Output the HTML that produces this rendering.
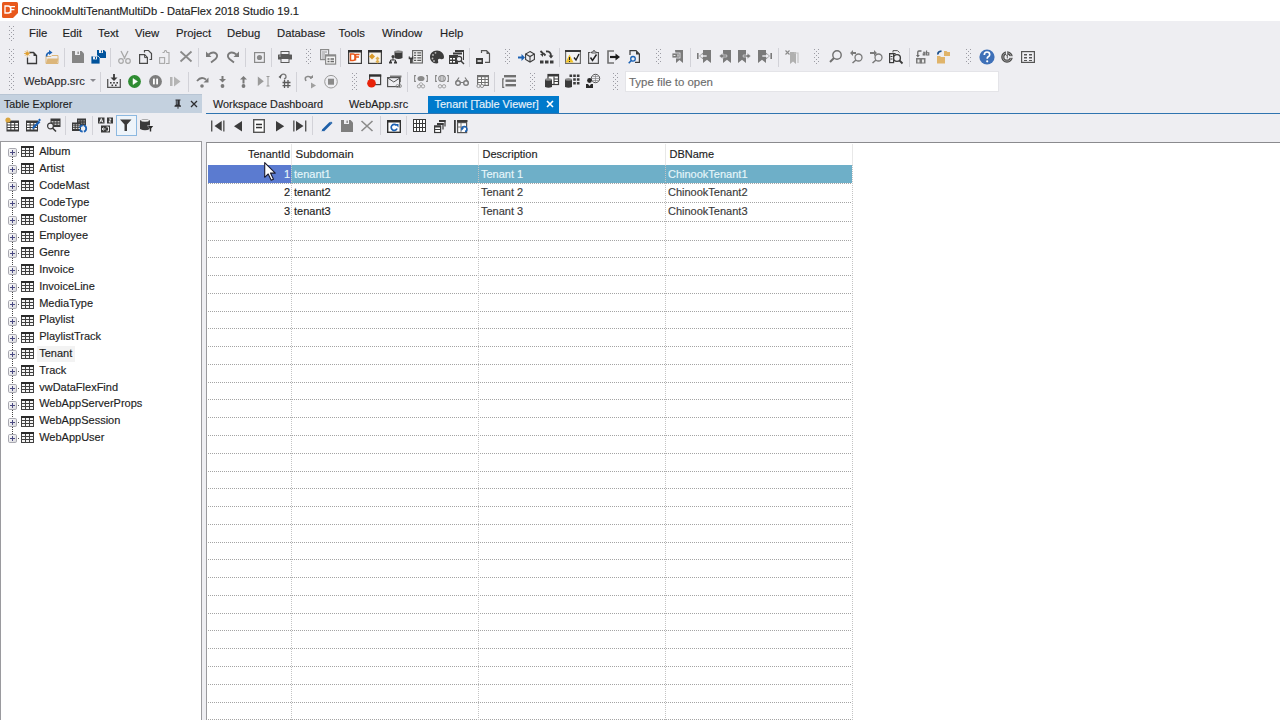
<!DOCTYPE html><html><head><meta charset="utf-8"><style>
*{margin:0;padding:0;box-sizing:border-box}
html,body{width:1280px;height:720px;overflow:hidden;background:#eeeef2;font-family:"Liberation Sans",sans-serif;font-size:11px;color:#1e1e1e}
body{position:relative}
.a{position:absolute}
.t{position:absolute;white-space:nowrap;line-height:11px;height:11px;-webkit-text-stroke:0.15px currentColor}
.grip{position:absolute;width:5px;background-image:linear-gradient(#b4b4bc,#b4b4bc),linear-gradient(#b4b4bc,#b4b4bc);background-size:1px 1px,1px 1px;background-position:0 0,2px 2px}
.sep{position:absolute;width:1px;background:#d2d2d8}
svg{position:absolute;overflow:visible}
</style></head><body>
<div class="a" style="left:0;top:0;width:1280px;height:21px;background:#fff"></div>
<div class="t" style="left:21.5px;top:5.5px;font-size:11.15px">ChinookMultiTenantMultiDb - DataFlex 2018 Studio 19.1</div>
<svg style="left:9px;top:26px" width="5" height="16"><rect x="0" y="0" width="1" height="1" fill="#9c9ca4"/><rect x="4" y="0" width="1" height="1" fill="#9c9ca4"/><rect x="2" y="2" width="1" height="1" fill="#9c9ca4"/><rect x="0" y="4" width="1" height="1" fill="#9c9ca4"/><rect x="4" y="4" width="1" height="1" fill="#9c9ca4"/><rect x="2" y="6" width="1" height="1" fill="#9c9ca4"/><rect x="0" y="8" width="1" height="1" fill="#9c9ca4"/><rect x="4" y="8" width="1" height="1" fill="#9c9ca4"/><rect x="2" y="10" width="1" height="1" fill="#9c9ca4"/><rect x="0" y="12" width="1" height="1" fill="#9c9ca4"/><rect x="4" y="12" width="1" height="1" fill="#9c9ca4"/><rect x="2" y="14" width="1" height="1" fill="#9c9ca4"/></svg>
<div class="t" style="left:29px;top:28px;font-size:11.3px">File</div>
<div class="t" style="left:62.5px;top:28px;font-size:11.3px">Edit</div>
<div class="t" style="left:98px;top:28px;font-size:11.3px">Text</div>
<div class="t" style="left:135px;top:28px;font-size:11.3px">View</div>
<div class="t" style="left:176px;top:28px;font-size:11.3px">Project</div>
<div class="t" style="left:227px;top:28px;font-size:11.3px">Debug</div>
<div class="t" style="left:277px;top:28px;font-size:11.3px">Database</div>
<div class="t" style="left:338.5px;top:28px;font-size:11.3px">Tools</div>
<div class="t" style="left:382px;top:28px;font-size:11.3px">Window</div>
<div class="t" style="left:440px;top:28px;font-size:11.3px">Help</div>
<svg style="left:9px;top:49px" width="5" height="16"><rect x="0" y="0" width="1" height="1" fill="#9c9ca4"/><rect x="4" y="0" width="1" height="1" fill="#9c9ca4"/><rect x="2" y="2" width="1" height="1" fill="#9c9ca4"/><rect x="0" y="4" width="1" height="1" fill="#9c9ca4"/><rect x="4" y="4" width="1" height="1" fill="#9c9ca4"/><rect x="2" y="6" width="1" height="1" fill="#9c9ca4"/><rect x="0" y="8" width="1" height="1" fill="#9c9ca4"/><rect x="4" y="8" width="1" height="1" fill="#9c9ca4"/><rect x="2" y="10" width="1" height="1" fill="#9c9ca4"/><rect x="0" y="12" width="1" height="1" fill="#9c9ca4"/><rect x="4" y="12" width="1" height="1" fill="#9c9ca4"/><rect x="2" y="14" width="1" height="1" fill="#9c9ca4"/></svg>
<svg style="left:9px;top:73px" width="5" height="17"><rect x="0" y="0" width="1" height="1" fill="#9c9ca4"/><rect x="4" y="0" width="1" height="1" fill="#9c9ca4"/><rect x="2" y="2" width="1" height="1" fill="#9c9ca4"/><rect x="0" y="4" width="1" height="1" fill="#9c9ca4"/><rect x="4" y="4" width="1" height="1" fill="#9c9ca4"/><rect x="2" y="6" width="1" height="1" fill="#9c9ca4"/><rect x="0" y="8" width="1" height="1" fill="#9c9ca4"/><rect x="4" y="8" width="1" height="1" fill="#9c9ca4"/><rect x="2" y="10" width="1" height="1" fill="#9c9ca4"/><rect x="0" y="12" width="1" height="1" fill="#9c9ca4"/><rect x="4" y="12" width="1" height="1" fill="#9c9ca4"/><rect x="2" y="14" width="1" height="1" fill="#9c9ca4"/><rect x="0" y="16" width="1" height="1" fill="#9c9ca4"/><rect x="4" y="16" width="1" height="1" fill="#9c9ca4"/></svg>
<div class="t" style="left:24px;top:75.5px;font-size:11.2px;color:#2d2d30">WebApp.src</div>
<svg style="left:90px;top:79px" width="6" height="4"><path d="M0 0h6l-3 3z" fill="#8a8a90"/></svg>
<div class="sep" style="left:64px;top:48px;height:19px"></div>
<div class="sep" style="left:110px;top:48px;height:19px"></div>
<div class="sep" style="left:198px;top:48px;height:19px"></div>
<div class="sep" style="left:245px;top:48px;height:19px"></div>
<div class="sep" style="left:271px;top:48px;height:19px"></div>
<div class="sep" style="left:340px;top:48px;height:19px"></div>
<div class="sep" style="left:469px;top:48px;height:19px"></div>
<div class="sep" style="left:559px;top:48px;height:19px"></div>
<div class="sep" style="left:690px;top:48px;height:19px"></div>
<div class="sep" style="left:778px;top:48px;height:19px"></div>
<div class="sep" style="left:909px;top:48px;height:19px"></div>
<div class="sep" style="left:100px;top:72px;height:20px"></div>
<div class="sep" style="left:188px;top:72px;height:20px"></div>
<div class="sep" style="left:296px;top:72px;height:20px"></div>
<div class="sep" style="left:407px;top:72px;height:20px"></div>
<div class="sep" style="left:494px;top:72px;height:20px"></div>
<svg style="left:306px;top:49px" width="5" height="16"><rect x="0" y="0" width="1" height="1" fill="#9c9ca4"/><rect x="4" y="0" width="1" height="1" fill="#9c9ca4"/><rect x="2" y="2" width="1" height="1" fill="#9c9ca4"/><rect x="0" y="4" width="1" height="1" fill="#9c9ca4"/><rect x="4" y="4" width="1" height="1" fill="#9c9ca4"/><rect x="2" y="6" width="1" height="1" fill="#9c9ca4"/><rect x="0" y="8" width="1" height="1" fill="#9c9ca4"/><rect x="4" y="8" width="1" height="1" fill="#9c9ca4"/><rect x="2" y="10" width="1" height="1" fill="#9c9ca4"/><rect x="0" y="12" width="1" height="1" fill="#9c9ca4"/><rect x="4" y="12" width="1" height="1" fill="#9c9ca4"/><rect x="2" y="14" width="1" height="1" fill="#9c9ca4"/></svg>
<svg style="left:505px;top:49px" width="5" height="16"><rect x="0" y="0" width="1" height="1" fill="#9c9ca4"/><rect x="4" y="0" width="1" height="1" fill="#9c9ca4"/><rect x="2" y="2" width="1" height="1" fill="#9c9ca4"/><rect x="0" y="4" width="1" height="1" fill="#9c9ca4"/><rect x="4" y="4" width="1" height="1" fill="#9c9ca4"/><rect x="2" y="6" width="1" height="1" fill="#9c9ca4"/><rect x="0" y="8" width="1" height="1" fill="#9c9ca4"/><rect x="4" y="8" width="1" height="1" fill="#9c9ca4"/><rect x="2" y="10" width="1" height="1" fill="#9c9ca4"/><rect x="0" y="12" width="1" height="1" fill="#9c9ca4"/><rect x="4" y="12" width="1" height="1" fill="#9c9ca4"/><rect x="2" y="14" width="1" height="1" fill="#9c9ca4"/></svg>
<svg style="left:656px;top:49px" width="5" height="16"><rect x="0" y="0" width="1" height="1" fill="#9c9ca4"/><rect x="4" y="0" width="1" height="1" fill="#9c9ca4"/><rect x="2" y="2" width="1" height="1" fill="#9c9ca4"/><rect x="0" y="4" width="1" height="1" fill="#9c9ca4"/><rect x="4" y="4" width="1" height="1" fill="#9c9ca4"/><rect x="2" y="6" width="1" height="1" fill="#9c9ca4"/><rect x="0" y="8" width="1" height="1" fill="#9c9ca4"/><rect x="4" y="8" width="1" height="1" fill="#9c9ca4"/><rect x="2" y="10" width="1" height="1" fill="#9c9ca4"/><rect x="0" y="12" width="1" height="1" fill="#9c9ca4"/><rect x="4" y="12" width="1" height="1" fill="#9c9ca4"/><rect x="2" y="14" width="1" height="1" fill="#9c9ca4"/></svg>
<svg style="left:814px;top:49px" width="5" height="16"><rect x="0" y="0" width="1" height="1" fill="#9c9ca4"/><rect x="4" y="0" width="1" height="1" fill="#9c9ca4"/><rect x="2" y="2" width="1" height="1" fill="#9c9ca4"/><rect x="0" y="4" width="1" height="1" fill="#9c9ca4"/><rect x="4" y="4" width="1" height="1" fill="#9c9ca4"/><rect x="2" y="6" width="1" height="1" fill="#9c9ca4"/><rect x="0" y="8" width="1" height="1" fill="#9c9ca4"/><rect x="4" y="8" width="1" height="1" fill="#9c9ca4"/><rect x="2" y="10" width="1" height="1" fill="#9c9ca4"/><rect x="0" y="12" width="1" height="1" fill="#9c9ca4"/><rect x="4" y="12" width="1" height="1" fill="#9c9ca4"/><rect x="2" y="14" width="1" height="1" fill="#9c9ca4"/></svg>
<svg style="left:966px;top:49px" width="5" height="16"><rect x="0" y="0" width="1" height="1" fill="#9c9ca4"/><rect x="4" y="0" width="1" height="1" fill="#9c9ca4"/><rect x="2" y="2" width="1" height="1" fill="#9c9ca4"/><rect x="0" y="4" width="1" height="1" fill="#9c9ca4"/><rect x="4" y="4" width="1" height="1" fill="#9c9ca4"/><rect x="2" y="6" width="1" height="1" fill="#9c9ca4"/><rect x="0" y="8" width="1" height="1" fill="#9c9ca4"/><rect x="4" y="8" width="1" height="1" fill="#9c9ca4"/><rect x="2" y="10" width="1" height="1" fill="#9c9ca4"/><rect x="0" y="12" width="1" height="1" fill="#9c9ca4"/><rect x="4" y="12" width="1" height="1" fill="#9c9ca4"/><rect x="2" y="14" width="1" height="1" fill="#9c9ca4"/></svg>
<svg style="left:352px;top:73px" width="5" height="17"><rect x="0" y="0" width="1" height="1" fill="#9c9ca4"/><rect x="4" y="0" width="1" height="1" fill="#9c9ca4"/><rect x="2" y="2" width="1" height="1" fill="#9c9ca4"/><rect x="0" y="4" width="1" height="1" fill="#9c9ca4"/><rect x="4" y="4" width="1" height="1" fill="#9c9ca4"/><rect x="2" y="6" width="1" height="1" fill="#9c9ca4"/><rect x="0" y="8" width="1" height="1" fill="#9c9ca4"/><rect x="4" y="8" width="1" height="1" fill="#9c9ca4"/><rect x="2" y="10" width="1" height="1" fill="#9c9ca4"/><rect x="0" y="12" width="1" height="1" fill="#9c9ca4"/><rect x="4" y="12" width="1" height="1" fill="#9c9ca4"/><rect x="2" y="14" width="1" height="1" fill="#9c9ca4"/><rect x="0" y="16" width="1" height="1" fill="#9c9ca4"/><rect x="4" y="16" width="1" height="1" fill="#9c9ca4"/></svg>
<svg style="left:530px;top:73px" width="5" height="17"><rect x="0" y="0" width="1" height="1" fill="#9c9ca4"/><rect x="4" y="0" width="1" height="1" fill="#9c9ca4"/><rect x="2" y="2" width="1" height="1" fill="#9c9ca4"/><rect x="0" y="4" width="1" height="1" fill="#9c9ca4"/><rect x="4" y="4" width="1" height="1" fill="#9c9ca4"/><rect x="2" y="6" width="1" height="1" fill="#9c9ca4"/><rect x="0" y="8" width="1" height="1" fill="#9c9ca4"/><rect x="4" y="8" width="1" height="1" fill="#9c9ca4"/><rect x="2" y="10" width="1" height="1" fill="#9c9ca4"/><rect x="0" y="12" width="1" height="1" fill="#9c9ca4"/><rect x="4" y="12" width="1" height="1" fill="#9c9ca4"/><rect x="2" y="14" width="1" height="1" fill="#9c9ca4"/><rect x="0" y="16" width="1" height="1" fill="#9c9ca4"/><rect x="4" y="16" width="1" height="1" fill="#9c9ca4"/></svg>
<svg style="left:613px;top:73px" width="5" height="17"><rect x="0" y="0" width="1" height="1" fill="#9c9ca4"/><rect x="4" y="0" width="1" height="1" fill="#9c9ca4"/><rect x="2" y="2" width="1" height="1" fill="#9c9ca4"/><rect x="0" y="4" width="1" height="1" fill="#9c9ca4"/><rect x="4" y="4" width="1" height="1" fill="#9c9ca4"/><rect x="2" y="6" width="1" height="1" fill="#9c9ca4"/><rect x="0" y="8" width="1" height="1" fill="#9c9ca4"/><rect x="4" y="8" width="1" height="1" fill="#9c9ca4"/><rect x="2" y="10" width="1" height="1" fill="#9c9ca4"/><rect x="0" y="12" width="1" height="1" fill="#9c9ca4"/><rect x="4" y="12" width="1" height="1" fill="#9c9ca4"/><rect x="2" y="14" width="1" height="1" fill="#9c9ca4"/><rect x="0" y="16" width="1" height="1" fill="#9c9ca4"/><rect x="4" y="16" width="1" height="1" fill="#9c9ca4"/></svg>
<div class="a" style="left:625px;top:71px;width:374px;height:21px;background:#fff;border:1px solid #e4e4e8"></div>
<div class="t" style="left:629px;top:76.5px;font-size:11.45px;color:#6d6d6d">Type file to open</div>
<div class="a" style="left:0;top:94px;width:202px;height:19px;background:#c4d1df;border-top:1px solid #b8c5d4"></div>
<div class="t" style="left:4px;top:99px;font-size:10.7px">Table Explorer</div>
<svg style="left:174px;top:99px" width="8" height="10"><path d="M1.5 0.5h5v1h-0.8v4.3l1.3 1v1H0.5v-1l1.3-1V1.5H1.5z" fill="#2d2d30"/><rect x="2.6" y="1.5" width="1" height="4" fill="#8a96a4"/><rect x="3.5" y="7.5" width="1" height="2.2" fill="#2d2d30"/></svg>
<svg style="left:190px;top:100px" width="8" height="8"><path d="M1 1l6 6M7 1l-6 6" stroke="#2d2d30" stroke-width="1.3"/></svg>
<div class="t" style="left:213px;top:98.5px;font-size:10.85px">Workspace Dashboard</div>
<div class="t" style="left:349px;top:98.5px;font-size:10.9px">WebApp.src</div>
<div class="a" style="left:428px;top:96px;width:131px;height:18px;background:#007acc"></div>
<div class="t" style="left:434.5px;top:98.5px;font-size:10.95px;color:#e8f2fa">Tenant [Table Viewer]</div>
<svg style="left:546px;top:100px" width="8" height="8"><path d="M1 1l6 6M7 1l-6 6" stroke="#fff" stroke-width="1.6"/></svg>
<div class="a" style="left:206px;top:113px;width:1074px;height:1px;background:#2f74b0"></div>
<div class="a" style="left:0;top:141px;width:202px;height:579px;background:#fff;border-left:1px solid #9a9a9e;border-top:1px solid #9a9a9e;border-right:1px solid #9a9a9e"></div>
<div class="t" style="left:39.2px;top:146.1px;font-size:11px;color:#1e1e1e">Album</div>
<svg style="left:8px;top:148px" width="9" height="9"><defs><linearGradient id="eg0" x1="0" y1="0" x2="1" y2="1"><stop offset="0" stop-color="#fdfdfd"/><stop offset="1" stop-color="#d8d8dc"/></linearGradient></defs><rect x="0.5" y="0.5" width="8" height="8" rx="1.2" fill="url(#eg0)" stroke="#a8a8b0"/><path d="M2 4.5h5M4.5 2v5" stroke="#4a4a82" stroke-width="1"/></svg>
<svg style="left:17px;top:152px" width="4" height="1"><rect x="1" y="0" width="1" height="1" fill="#555"/></svg>
<svg style="left:12px;top:157px" width="1" height="9"><rect x="0" y="0" width="1" height="1" fill="#444"/><rect x="0" y="2" width="1" height="1" fill="#444"/><rect x="0" y="4" width="1" height="1" fill="#444"/><rect x="0" y="6" width="1" height="1" fill="#444"/><rect x="0" y="8" width="1" height="1" fill="#444"/></svg>
<svg style="left:21px;top:146px" width="13" height="11"><rect x="0" y="0" width="13" height="11" fill="#404040"/><rect x="0" y="0" width="13" height="2" fill="#2a2a2a"/><rect x="1" y="2" width="3" height="2" fill="#f4f4f4"/><rect x="5" y="2" width="3" height="2" fill="#f4f4f4"/><rect x="9" y="2" width="3" height="2" fill="#f4f4f4"/><rect x="1" y="5" width="3" height="2" fill="#f4f4f4"/><rect x="5" y="5" width="3" height="2" fill="#f4f4f4"/><rect x="9" y="5" width="3" height="2" fill="#f4f4f4"/><rect x="1" y="8" width="3" height="2" fill="#f4f4f4"/><rect x="5" y="8" width="3" height="2" fill="#f4f4f4"/><rect x="9" y="8" width="3" height="2" fill="#f4f4f4"/></svg>
<div class="t" style="left:39.2px;top:162.9px;font-size:11px;color:#1e1e1e">Artist</div>
<svg style="left:8px;top:165px" width="9" height="9"><defs><linearGradient id="eg1" x1="0" y1="0" x2="1" y2="1"><stop offset="0" stop-color="#fdfdfd"/><stop offset="1" stop-color="#d8d8dc"/></linearGradient></defs><rect x="0.5" y="0.5" width="8" height="8" rx="1.2" fill="url(#eg1)" stroke="#a8a8b0"/><path d="M2 4.5h5M4.5 2v5" stroke="#4a4a82" stroke-width="1"/></svg>
<svg style="left:17px;top:169px" width="4" height="1"><rect x="1" y="0" width="1" height="1" fill="#555"/></svg>
<svg style="left:12px;top:174px" width="1" height="9"><rect x="0" y="0" width="1" height="1" fill="#444"/><rect x="0" y="2" width="1" height="1" fill="#444"/><rect x="0" y="4" width="1" height="1" fill="#444"/><rect x="0" y="6" width="1" height="1" fill="#444"/><rect x="0" y="8" width="1" height="1" fill="#444"/></svg>
<svg style="left:21px;top:163px" width="13" height="11"><rect x="0" y="0" width="13" height="11" fill="#404040"/><rect x="0" y="0" width="13" height="2" fill="#2a2a2a"/><rect x="1" y="2" width="3" height="2" fill="#f4f4f4"/><rect x="5" y="2" width="3" height="2" fill="#f4f4f4"/><rect x="9" y="2" width="3" height="2" fill="#f4f4f4"/><rect x="1" y="5" width="3" height="2" fill="#f4f4f4"/><rect x="5" y="5" width="3" height="2" fill="#f4f4f4"/><rect x="9" y="5" width="3" height="2" fill="#f4f4f4"/><rect x="1" y="8" width="3" height="2" fill="#f4f4f4"/><rect x="5" y="8" width="3" height="2" fill="#f4f4f4"/><rect x="9" y="8" width="3" height="2" fill="#f4f4f4"/></svg>
<div class="t" style="left:39.2px;top:179.7px;font-size:11px;color:#1e1e1e">CodeMast</div>
<svg style="left:8px;top:182px" width="9" height="9"><defs><linearGradient id="eg2" x1="0" y1="0" x2="1" y2="1"><stop offset="0" stop-color="#fdfdfd"/><stop offset="1" stop-color="#d8d8dc"/></linearGradient></defs><rect x="0.5" y="0.5" width="8" height="8" rx="1.2" fill="url(#eg2)" stroke="#a8a8b0"/><path d="M2 4.5h5M4.5 2v5" stroke="#4a4a82" stroke-width="1"/></svg>
<svg style="left:17px;top:186px" width="4" height="1"><rect x="1" y="0" width="1" height="1" fill="#555"/></svg>
<svg style="left:12px;top:191px" width="1" height="9"><rect x="0" y="0" width="1" height="1" fill="#444"/><rect x="0" y="2" width="1" height="1" fill="#444"/><rect x="0" y="4" width="1" height="1" fill="#444"/><rect x="0" y="6" width="1" height="1" fill="#444"/><rect x="0" y="8" width="1" height="1" fill="#444"/></svg>
<svg style="left:21px;top:180px" width="13" height="11"><rect x="0" y="0" width="13" height="11" fill="#404040"/><rect x="0" y="0" width="13" height="2" fill="#2a2a2a"/><rect x="1" y="2" width="3" height="2" fill="#f4f4f4"/><rect x="5" y="2" width="3" height="2" fill="#f4f4f4"/><rect x="9" y="2" width="3" height="2" fill="#f4f4f4"/><rect x="1" y="5" width="3" height="2" fill="#f4f4f4"/><rect x="5" y="5" width="3" height="2" fill="#f4f4f4"/><rect x="9" y="5" width="3" height="2" fill="#f4f4f4"/><rect x="1" y="8" width="3" height="2" fill="#f4f4f4"/><rect x="5" y="8" width="3" height="2" fill="#f4f4f4"/><rect x="9" y="8" width="3" height="2" fill="#f4f4f4"/></svg>
<div class="t" style="left:39.2px;top:196.6px;font-size:11px;color:#1e1e1e">CodeType</div>
<svg style="left:8px;top:199px" width="9" height="9"><defs><linearGradient id="eg3" x1="0" y1="0" x2="1" y2="1"><stop offset="0" stop-color="#fdfdfd"/><stop offset="1" stop-color="#d8d8dc"/></linearGradient></defs><rect x="0.5" y="0.5" width="8" height="8" rx="1.2" fill="url(#eg3)" stroke="#a8a8b0"/><path d="M2 4.5h5M4.5 2v5" stroke="#4a4a82" stroke-width="1"/></svg>
<svg style="left:17px;top:203px" width="4" height="1"><rect x="1" y="0" width="1" height="1" fill="#555"/></svg>
<svg style="left:12px;top:208px" width="1" height="9"><rect x="0" y="0" width="1" height="1" fill="#444"/><rect x="0" y="2" width="1" height="1" fill="#444"/><rect x="0" y="4" width="1" height="1" fill="#444"/><rect x="0" y="6" width="1" height="1" fill="#444"/><rect x="0" y="8" width="1" height="1" fill="#444"/></svg>
<svg style="left:21px;top:197px" width="13" height="11"><rect x="0" y="0" width="13" height="11" fill="#404040"/><rect x="0" y="0" width="13" height="2" fill="#2a2a2a"/><rect x="1" y="2" width="3" height="2" fill="#f4f4f4"/><rect x="5" y="2" width="3" height="2" fill="#f4f4f4"/><rect x="9" y="2" width="3" height="2" fill="#f4f4f4"/><rect x="1" y="5" width="3" height="2" fill="#f4f4f4"/><rect x="5" y="5" width="3" height="2" fill="#f4f4f4"/><rect x="9" y="5" width="3" height="2" fill="#f4f4f4"/><rect x="1" y="8" width="3" height="2" fill="#f4f4f4"/><rect x="5" y="8" width="3" height="2" fill="#f4f4f4"/><rect x="9" y="8" width="3" height="2" fill="#f4f4f4"/></svg>
<div class="t" style="left:39.2px;top:213.4px;font-size:11px;color:#1e1e1e">Customer</div>
<svg style="left:8px;top:216px" width="9" height="9"><defs><linearGradient id="eg4" x1="0" y1="0" x2="1" y2="1"><stop offset="0" stop-color="#fdfdfd"/><stop offset="1" stop-color="#d8d8dc"/></linearGradient></defs><rect x="0.5" y="0.5" width="8" height="8" rx="1.2" fill="url(#eg4)" stroke="#a8a8b0"/><path d="M2 4.5h5M4.5 2v5" stroke="#4a4a82" stroke-width="1"/></svg>
<svg style="left:17px;top:220px" width="4" height="1"><rect x="1" y="0" width="1" height="1" fill="#555"/></svg>
<svg style="left:12px;top:225px" width="1" height="9"><rect x="0" y="0" width="1" height="1" fill="#444"/><rect x="0" y="2" width="1" height="1" fill="#444"/><rect x="0" y="4" width="1" height="1" fill="#444"/><rect x="0" y="6" width="1" height="1" fill="#444"/><rect x="0" y="8" width="1" height="1" fill="#444"/></svg>
<svg style="left:21px;top:214px" width="13" height="11"><rect x="0" y="0" width="13" height="11" fill="#404040"/><rect x="0" y="0" width="13" height="2" fill="#2a2a2a"/><rect x="1" y="2" width="3" height="2" fill="#f4f4f4"/><rect x="5" y="2" width="3" height="2" fill="#f4f4f4"/><rect x="9" y="2" width="3" height="2" fill="#f4f4f4"/><rect x="1" y="5" width="3" height="2" fill="#f4f4f4"/><rect x="5" y="5" width="3" height="2" fill="#f4f4f4"/><rect x="9" y="5" width="3" height="2" fill="#f4f4f4"/><rect x="1" y="8" width="3" height="2" fill="#f4f4f4"/><rect x="5" y="8" width="3" height="2" fill="#f4f4f4"/><rect x="9" y="8" width="3" height="2" fill="#f4f4f4"/></svg>
<div class="t" style="left:39.2px;top:230.2px;font-size:11px;color:#1e1e1e">Employee</div>
<svg style="left:8px;top:233px" width="9" height="9"><defs><linearGradient id="eg5" x1="0" y1="0" x2="1" y2="1"><stop offset="0" stop-color="#fdfdfd"/><stop offset="1" stop-color="#d8d8dc"/></linearGradient></defs><rect x="0.5" y="0.5" width="8" height="8" rx="1.2" fill="url(#eg5)" stroke="#a8a8b0"/><path d="M2 4.5h5M4.5 2v5" stroke="#4a4a82" stroke-width="1"/></svg>
<svg style="left:17px;top:237px" width="4" height="1"><rect x="1" y="0" width="1" height="1" fill="#555"/></svg>
<svg style="left:12px;top:242px" width="1" height="9"><rect x="0" y="0" width="1" height="1" fill="#444"/><rect x="0" y="2" width="1" height="1" fill="#444"/><rect x="0" y="4" width="1" height="1" fill="#444"/><rect x="0" y="6" width="1" height="1" fill="#444"/><rect x="0" y="8" width="1" height="1" fill="#444"/></svg>
<svg style="left:21px;top:231px" width="13" height="11"><rect x="0" y="0" width="13" height="11" fill="#404040"/><rect x="0" y="0" width="13" height="2" fill="#2a2a2a"/><rect x="1" y="2" width="3" height="2" fill="#f4f4f4"/><rect x="5" y="2" width="3" height="2" fill="#f4f4f4"/><rect x="9" y="2" width="3" height="2" fill="#f4f4f4"/><rect x="1" y="5" width="3" height="2" fill="#f4f4f4"/><rect x="5" y="5" width="3" height="2" fill="#f4f4f4"/><rect x="9" y="5" width="3" height="2" fill="#f4f4f4"/><rect x="1" y="8" width="3" height="2" fill="#f4f4f4"/><rect x="5" y="8" width="3" height="2" fill="#f4f4f4"/><rect x="9" y="8" width="3" height="2" fill="#f4f4f4"/></svg>
<div class="t" style="left:39.2px;top:247.0px;font-size:11px;color:#1e1e1e">Genre</div>
<svg style="left:8px;top:249px" width="9" height="9"><defs><linearGradient id="eg6" x1="0" y1="0" x2="1" y2="1"><stop offset="0" stop-color="#fdfdfd"/><stop offset="1" stop-color="#d8d8dc"/></linearGradient></defs><rect x="0.5" y="0.5" width="8" height="8" rx="1.2" fill="url(#eg6)" stroke="#a8a8b0"/><path d="M2 4.5h5M4.5 2v5" stroke="#4a4a82" stroke-width="1"/></svg>
<svg style="left:17px;top:253px" width="4" height="1"><rect x="1" y="0" width="1" height="1" fill="#555"/></svg>
<svg style="left:12px;top:258px" width="1" height="9"><rect x="0" y="0" width="1" height="1" fill="#444"/><rect x="0" y="2" width="1" height="1" fill="#444"/><rect x="0" y="4" width="1" height="1" fill="#444"/><rect x="0" y="6" width="1" height="1" fill="#444"/><rect x="0" y="8" width="1" height="1" fill="#444"/></svg>
<svg style="left:21px;top:247px" width="13" height="11"><rect x="0" y="0" width="13" height="11" fill="#404040"/><rect x="0" y="0" width="13" height="2" fill="#2a2a2a"/><rect x="1" y="2" width="3" height="2" fill="#f4f4f4"/><rect x="5" y="2" width="3" height="2" fill="#f4f4f4"/><rect x="9" y="2" width="3" height="2" fill="#f4f4f4"/><rect x="1" y="5" width="3" height="2" fill="#f4f4f4"/><rect x="5" y="5" width="3" height="2" fill="#f4f4f4"/><rect x="9" y="5" width="3" height="2" fill="#f4f4f4"/><rect x="1" y="8" width="3" height="2" fill="#f4f4f4"/><rect x="5" y="8" width="3" height="2" fill="#f4f4f4"/><rect x="9" y="8" width="3" height="2" fill="#f4f4f4"/></svg>
<div class="t" style="left:39.2px;top:263.8px;font-size:11px;color:#1e1e1e">Invoice</div>
<svg style="left:8px;top:266px" width="9" height="9"><defs><linearGradient id="eg7" x1="0" y1="0" x2="1" y2="1"><stop offset="0" stop-color="#fdfdfd"/><stop offset="1" stop-color="#d8d8dc"/></linearGradient></defs><rect x="0.5" y="0.5" width="8" height="8" rx="1.2" fill="url(#eg7)" stroke="#a8a8b0"/><path d="M2 4.5h5M4.5 2v5" stroke="#4a4a82" stroke-width="1"/></svg>
<svg style="left:17px;top:270px" width="4" height="1"><rect x="1" y="0" width="1" height="1" fill="#555"/></svg>
<svg style="left:12px;top:275px" width="1" height="9"><rect x="0" y="0" width="1" height="1" fill="#444"/><rect x="0" y="2" width="1" height="1" fill="#444"/><rect x="0" y="4" width="1" height="1" fill="#444"/><rect x="0" y="6" width="1" height="1" fill="#444"/><rect x="0" y="8" width="1" height="1" fill="#444"/></svg>
<svg style="left:21px;top:264px" width="13" height="11"><rect x="0" y="0" width="13" height="11" fill="#404040"/><rect x="0" y="0" width="13" height="2" fill="#2a2a2a"/><rect x="1" y="2" width="3" height="2" fill="#f4f4f4"/><rect x="5" y="2" width="3" height="2" fill="#f4f4f4"/><rect x="9" y="2" width="3" height="2" fill="#f4f4f4"/><rect x="1" y="5" width="3" height="2" fill="#f4f4f4"/><rect x="5" y="5" width="3" height="2" fill="#f4f4f4"/><rect x="9" y="5" width="3" height="2" fill="#f4f4f4"/><rect x="1" y="8" width="3" height="2" fill="#f4f4f4"/><rect x="5" y="8" width="3" height="2" fill="#f4f4f4"/><rect x="9" y="8" width="3" height="2" fill="#f4f4f4"/></svg>
<div class="t" style="left:39.2px;top:280.7px;font-size:11px;color:#1e1e1e">InvoiceLine</div>
<svg style="left:8px;top:283px" width="9" height="9"><defs><linearGradient id="eg8" x1="0" y1="0" x2="1" y2="1"><stop offset="0" stop-color="#fdfdfd"/><stop offset="1" stop-color="#d8d8dc"/></linearGradient></defs><rect x="0.5" y="0.5" width="8" height="8" rx="1.2" fill="url(#eg8)" stroke="#a8a8b0"/><path d="M2 4.5h5M4.5 2v5" stroke="#4a4a82" stroke-width="1"/></svg>
<svg style="left:17px;top:287px" width="4" height="1"><rect x="1" y="0" width="1" height="1" fill="#555"/></svg>
<svg style="left:12px;top:292px" width="1" height="9"><rect x="0" y="0" width="1" height="1" fill="#444"/><rect x="0" y="2" width="1" height="1" fill="#444"/><rect x="0" y="4" width="1" height="1" fill="#444"/><rect x="0" y="6" width="1" height="1" fill="#444"/><rect x="0" y="8" width="1" height="1" fill="#444"/></svg>
<svg style="left:21px;top:281px" width="13" height="11"><rect x="0" y="0" width="13" height="11" fill="#404040"/><rect x="0" y="0" width="13" height="2" fill="#2a2a2a"/><rect x="1" y="2" width="3" height="2" fill="#f4f4f4"/><rect x="5" y="2" width="3" height="2" fill="#f4f4f4"/><rect x="9" y="2" width="3" height="2" fill="#f4f4f4"/><rect x="1" y="5" width="3" height="2" fill="#f4f4f4"/><rect x="5" y="5" width="3" height="2" fill="#f4f4f4"/><rect x="9" y="5" width="3" height="2" fill="#f4f4f4"/><rect x="1" y="8" width="3" height="2" fill="#f4f4f4"/><rect x="5" y="8" width="3" height="2" fill="#f4f4f4"/><rect x="9" y="8" width="3" height="2" fill="#f4f4f4"/></svg>
<div class="t" style="left:39.2px;top:297.5px;font-size:11px;color:#1e1e1e">MediaType</div>
<svg style="left:8px;top:300px" width="9" height="9"><defs><linearGradient id="eg9" x1="0" y1="0" x2="1" y2="1"><stop offset="0" stop-color="#fdfdfd"/><stop offset="1" stop-color="#d8d8dc"/></linearGradient></defs><rect x="0.5" y="0.5" width="8" height="8" rx="1.2" fill="url(#eg9)" stroke="#a8a8b0"/><path d="M2 4.5h5M4.5 2v5" stroke="#4a4a82" stroke-width="1"/></svg>
<svg style="left:17px;top:304px" width="4" height="1"><rect x="1" y="0" width="1" height="1" fill="#555"/></svg>
<svg style="left:12px;top:309px" width="1" height="9"><rect x="0" y="0" width="1" height="1" fill="#444"/><rect x="0" y="2" width="1" height="1" fill="#444"/><rect x="0" y="4" width="1" height="1" fill="#444"/><rect x="0" y="6" width="1" height="1" fill="#444"/><rect x="0" y="8" width="1" height="1" fill="#444"/></svg>
<svg style="left:21px;top:298px" width="13" height="11"><rect x="0" y="0" width="13" height="11" fill="#404040"/><rect x="0" y="0" width="13" height="2" fill="#2a2a2a"/><rect x="1" y="2" width="3" height="2" fill="#f4f4f4"/><rect x="5" y="2" width="3" height="2" fill="#f4f4f4"/><rect x="9" y="2" width="3" height="2" fill="#f4f4f4"/><rect x="1" y="5" width="3" height="2" fill="#f4f4f4"/><rect x="5" y="5" width="3" height="2" fill="#f4f4f4"/><rect x="9" y="5" width="3" height="2" fill="#f4f4f4"/><rect x="1" y="8" width="3" height="2" fill="#f4f4f4"/><rect x="5" y="8" width="3" height="2" fill="#f4f4f4"/><rect x="9" y="8" width="3" height="2" fill="#f4f4f4"/></svg>
<div class="t" style="left:39.2px;top:314.3px;font-size:11px;color:#1e1e1e">Playlist</div>
<svg style="left:8px;top:317px" width="9" height="9"><defs><linearGradient id="eg10" x1="0" y1="0" x2="1" y2="1"><stop offset="0" stop-color="#fdfdfd"/><stop offset="1" stop-color="#d8d8dc"/></linearGradient></defs><rect x="0.5" y="0.5" width="8" height="8" rx="1.2" fill="url(#eg10)" stroke="#a8a8b0"/><path d="M2 4.5h5M4.5 2v5" stroke="#4a4a82" stroke-width="1"/></svg>
<svg style="left:17px;top:321px" width="4" height="1"><rect x="1" y="0" width="1" height="1" fill="#555"/></svg>
<svg style="left:12px;top:326px" width="1" height="9"><rect x="0" y="0" width="1" height="1" fill="#444"/><rect x="0" y="2" width="1" height="1" fill="#444"/><rect x="0" y="4" width="1" height="1" fill="#444"/><rect x="0" y="6" width="1" height="1" fill="#444"/><rect x="0" y="8" width="1" height="1" fill="#444"/></svg>
<svg style="left:21px;top:315px" width="13" height="11"><rect x="0" y="0" width="13" height="11" fill="#404040"/><rect x="0" y="0" width="13" height="2" fill="#2a2a2a"/><rect x="1" y="2" width="3" height="2" fill="#f4f4f4"/><rect x="5" y="2" width="3" height="2" fill="#f4f4f4"/><rect x="9" y="2" width="3" height="2" fill="#f4f4f4"/><rect x="1" y="5" width="3" height="2" fill="#f4f4f4"/><rect x="5" y="5" width="3" height="2" fill="#f4f4f4"/><rect x="9" y="5" width="3" height="2" fill="#f4f4f4"/><rect x="1" y="8" width="3" height="2" fill="#f4f4f4"/><rect x="5" y="8" width="3" height="2" fill="#f4f4f4"/><rect x="9" y="8" width="3" height="2" fill="#f4f4f4"/></svg>
<div class="t" style="left:39.2px;top:331.1px;font-size:11px;color:#1e1e1e">PlaylistTrack</div>
<svg style="left:8px;top:334px" width="9" height="9"><defs><linearGradient id="eg11" x1="0" y1="0" x2="1" y2="1"><stop offset="0" stop-color="#fdfdfd"/><stop offset="1" stop-color="#d8d8dc"/></linearGradient></defs><rect x="0.5" y="0.5" width="8" height="8" rx="1.2" fill="url(#eg11)" stroke="#a8a8b0"/><path d="M2 4.5h5M4.5 2v5" stroke="#4a4a82" stroke-width="1"/></svg>
<svg style="left:17px;top:338px" width="4" height="1"><rect x="1" y="0" width="1" height="1" fill="#555"/></svg>
<svg style="left:12px;top:343px" width="1" height="9"><rect x="0" y="0" width="1" height="1" fill="#444"/><rect x="0" y="2" width="1" height="1" fill="#444"/><rect x="0" y="4" width="1" height="1" fill="#444"/><rect x="0" y="6" width="1" height="1" fill="#444"/><rect x="0" y="8" width="1" height="1" fill="#444"/></svg>
<svg style="left:21px;top:332px" width="13" height="11"><rect x="0" y="0" width="13" height="11" fill="#404040"/><rect x="0" y="0" width="13" height="2" fill="#2a2a2a"/><rect x="1" y="2" width="3" height="2" fill="#f4f4f4"/><rect x="5" y="2" width="3" height="2" fill="#f4f4f4"/><rect x="9" y="2" width="3" height="2" fill="#f4f4f4"/><rect x="1" y="5" width="3" height="2" fill="#f4f4f4"/><rect x="5" y="5" width="3" height="2" fill="#f4f4f4"/><rect x="9" y="5" width="3" height="2" fill="#f4f4f4"/><rect x="1" y="8" width="3" height="2" fill="#f4f4f4"/><rect x="5" y="8" width="3" height="2" fill="#f4f4f4"/><rect x="9" y="8" width="3" height="2" fill="#f4f4f4"/></svg>
<div class="a" style="left:37px;top:346px;width:38px;height:16px;background:#f3f3f3"></div>
<div class="t" style="left:39.2px;top:347.9px;font-size:11px;color:#1e1e1e">Tenant</div>
<svg style="left:8px;top:350px" width="9" height="9"><defs><linearGradient id="eg12" x1="0" y1="0" x2="1" y2="1"><stop offset="0" stop-color="#fdfdfd"/><stop offset="1" stop-color="#d8d8dc"/></linearGradient></defs><rect x="0.5" y="0.5" width="8" height="8" rx="1.2" fill="url(#eg12)" stroke="#a8a8b0"/><path d="M2 4.5h5M4.5 2v5" stroke="#4a4a82" stroke-width="1"/></svg>
<svg style="left:17px;top:354px" width="4" height="1"><rect x="1" y="0" width="1" height="1" fill="#555"/></svg>
<svg style="left:12px;top:359px" width="1" height="9"><rect x="0" y="0" width="1" height="1" fill="#444"/><rect x="0" y="2" width="1" height="1" fill="#444"/><rect x="0" y="4" width="1" height="1" fill="#444"/><rect x="0" y="6" width="1" height="1" fill="#444"/><rect x="0" y="8" width="1" height="1" fill="#444"/></svg>
<svg style="left:21px;top:348px" width="13" height="11"><rect x="0" y="0" width="13" height="11" fill="#404040"/><rect x="0" y="0" width="13" height="2" fill="#2a2a2a"/><rect x="1" y="2" width="3" height="2" fill="#f4f4f4"/><rect x="5" y="2" width="3" height="2" fill="#f4f4f4"/><rect x="9" y="2" width="3" height="2" fill="#f4f4f4"/><rect x="1" y="5" width="3" height="2" fill="#f4f4f4"/><rect x="5" y="5" width="3" height="2" fill="#f4f4f4"/><rect x="9" y="5" width="3" height="2" fill="#f4f4f4"/><rect x="1" y="8" width="3" height="2" fill="#f4f4f4"/><rect x="5" y="8" width="3" height="2" fill="#f4f4f4"/><rect x="9" y="8" width="3" height="2" fill="#f4f4f4"/></svg>
<div class="t" style="left:39.2px;top:364.8px;font-size:11px;color:#1e1e1e">Track</div>
<svg style="left:8px;top:367px" width="9" height="9"><defs><linearGradient id="eg13" x1="0" y1="0" x2="1" y2="1"><stop offset="0" stop-color="#fdfdfd"/><stop offset="1" stop-color="#d8d8dc"/></linearGradient></defs><rect x="0.5" y="0.5" width="8" height="8" rx="1.2" fill="url(#eg13)" stroke="#a8a8b0"/><path d="M2 4.5h5M4.5 2v5" stroke="#4a4a82" stroke-width="1"/></svg>
<svg style="left:17px;top:371px" width="4" height="1"><rect x="1" y="0" width="1" height="1" fill="#555"/></svg>
<svg style="left:12px;top:376px" width="1" height="9"><rect x="0" y="0" width="1" height="1" fill="#444"/><rect x="0" y="2" width="1" height="1" fill="#444"/><rect x="0" y="4" width="1" height="1" fill="#444"/><rect x="0" y="6" width="1" height="1" fill="#444"/><rect x="0" y="8" width="1" height="1" fill="#444"/></svg>
<svg style="left:21px;top:365px" width="13" height="11"><rect x="0" y="0" width="13" height="11" fill="#404040"/><rect x="0" y="0" width="13" height="2" fill="#2a2a2a"/><rect x="1" y="2" width="3" height="2" fill="#f4f4f4"/><rect x="5" y="2" width="3" height="2" fill="#f4f4f4"/><rect x="9" y="2" width="3" height="2" fill="#f4f4f4"/><rect x="1" y="5" width="3" height="2" fill="#f4f4f4"/><rect x="5" y="5" width="3" height="2" fill="#f4f4f4"/><rect x="9" y="5" width="3" height="2" fill="#f4f4f4"/><rect x="1" y="8" width="3" height="2" fill="#f4f4f4"/><rect x="5" y="8" width="3" height="2" fill="#f4f4f4"/><rect x="9" y="8" width="3" height="2" fill="#f4f4f4"/></svg>
<div class="t" style="left:39.2px;top:381.6px;font-size:11px;color:#1e1e1e">vwDataFlexFind</div>
<svg style="left:8px;top:384px" width="9" height="9"><defs><linearGradient id="eg14" x1="0" y1="0" x2="1" y2="1"><stop offset="0" stop-color="#fdfdfd"/><stop offset="1" stop-color="#d8d8dc"/></linearGradient></defs><rect x="0.5" y="0.5" width="8" height="8" rx="1.2" fill="url(#eg14)" stroke="#a8a8b0"/><path d="M2 4.5h5M4.5 2v5" stroke="#4a4a82" stroke-width="1"/></svg>
<svg style="left:17px;top:388px" width="4" height="1"><rect x="1" y="0" width="1" height="1" fill="#555"/></svg>
<svg style="left:12px;top:393px" width="1" height="9"><rect x="0" y="0" width="1" height="1" fill="#444"/><rect x="0" y="2" width="1" height="1" fill="#444"/><rect x="0" y="4" width="1" height="1" fill="#444"/><rect x="0" y="6" width="1" height="1" fill="#444"/><rect x="0" y="8" width="1" height="1" fill="#444"/></svg>
<svg style="left:21px;top:382px" width="13" height="11"><rect x="0" y="0" width="13" height="11" fill="#404040"/><rect x="0" y="0" width="13" height="2" fill="#2a2a2a"/><rect x="1" y="2" width="3" height="2" fill="#f4f4f4"/><rect x="5" y="2" width="3" height="2" fill="#f4f4f4"/><rect x="9" y="2" width="3" height="2" fill="#f4f4f4"/><rect x="1" y="5" width="3" height="2" fill="#f4f4f4"/><rect x="5" y="5" width="3" height="2" fill="#f4f4f4"/><rect x="9" y="5" width="3" height="2" fill="#f4f4f4"/><rect x="1" y="8" width="3" height="2" fill="#f4f4f4"/><rect x="5" y="8" width="3" height="2" fill="#f4f4f4"/><rect x="9" y="8" width="3" height="2" fill="#f4f4f4"/></svg>
<div class="t" style="left:39.2px;top:398.4px;font-size:11px;color:#1e1e1e">WebAppServerProps</div>
<svg style="left:8px;top:401px" width="9" height="9"><defs><linearGradient id="eg15" x1="0" y1="0" x2="1" y2="1"><stop offset="0" stop-color="#fdfdfd"/><stop offset="1" stop-color="#d8d8dc"/></linearGradient></defs><rect x="0.5" y="0.5" width="8" height="8" rx="1.2" fill="url(#eg15)" stroke="#a8a8b0"/><path d="M2 4.5h5M4.5 2v5" stroke="#4a4a82" stroke-width="1"/></svg>
<svg style="left:17px;top:405px" width="4" height="1"><rect x="1" y="0" width="1" height="1" fill="#555"/></svg>
<svg style="left:12px;top:410px" width="1" height="9"><rect x="0" y="0" width="1" height="1" fill="#444"/><rect x="0" y="2" width="1" height="1" fill="#444"/><rect x="0" y="4" width="1" height="1" fill="#444"/><rect x="0" y="6" width="1" height="1" fill="#444"/><rect x="0" y="8" width="1" height="1" fill="#444"/></svg>
<svg style="left:21px;top:399px" width="13" height="11"><rect x="0" y="0" width="13" height="11" fill="#404040"/><rect x="0" y="0" width="13" height="2" fill="#2a2a2a"/><rect x="1" y="2" width="3" height="2" fill="#f4f4f4"/><rect x="5" y="2" width="3" height="2" fill="#f4f4f4"/><rect x="9" y="2" width="3" height="2" fill="#f4f4f4"/><rect x="1" y="5" width="3" height="2" fill="#f4f4f4"/><rect x="5" y="5" width="3" height="2" fill="#f4f4f4"/><rect x="9" y="5" width="3" height="2" fill="#f4f4f4"/><rect x="1" y="8" width="3" height="2" fill="#f4f4f4"/><rect x="5" y="8" width="3" height="2" fill="#f4f4f4"/><rect x="9" y="8" width="3" height="2" fill="#f4f4f4"/></svg>
<div class="t" style="left:39.2px;top:415.2px;font-size:11px;color:#1e1e1e">WebAppSession</div>
<svg style="left:8px;top:418px" width="9" height="9"><defs><linearGradient id="eg16" x1="0" y1="0" x2="1" y2="1"><stop offset="0" stop-color="#fdfdfd"/><stop offset="1" stop-color="#d8d8dc"/></linearGradient></defs><rect x="0.5" y="0.5" width="8" height="8" rx="1.2" fill="url(#eg16)" stroke="#a8a8b0"/><path d="M2 4.5h5M4.5 2v5" stroke="#4a4a82" stroke-width="1"/></svg>
<svg style="left:17px;top:422px" width="4" height="1"><rect x="1" y="0" width="1" height="1" fill="#555"/></svg>
<svg style="left:12px;top:427px" width="1" height="9"><rect x="0" y="0" width="1" height="1" fill="#444"/><rect x="0" y="2" width="1" height="1" fill="#444"/><rect x="0" y="4" width="1" height="1" fill="#444"/><rect x="0" y="6" width="1" height="1" fill="#444"/><rect x="0" y="8" width="1" height="1" fill="#444"/></svg>
<svg style="left:21px;top:416px" width="13" height="11"><rect x="0" y="0" width="13" height="11" fill="#404040"/><rect x="0" y="0" width="13" height="2" fill="#2a2a2a"/><rect x="1" y="2" width="3" height="2" fill="#f4f4f4"/><rect x="5" y="2" width="3" height="2" fill="#f4f4f4"/><rect x="9" y="2" width="3" height="2" fill="#f4f4f4"/><rect x="1" y="5" width="3" height="2" fill="#f4f4f4"/><rect x="5" y="5" width="3" height="2" fill="#f4f4f4"/><rect x="9" y="5" width="3" height="2" fill="#f4f4f4"/><rect x="1" y="8" width="3" height="2" fill="#f4f4f4"/><rect x="5" y="8" width="3" height="2" fill="#f4f4f4"/><rect x="9" y="8" width="3" height="2" fill="#f4f4f4"/></svg>
<div class="t" style="left:39.2px;top:432.0px;font-size:11px;color:#1e1e1e">WebAppUser</div>
<svg style="left:8px;top:434px" width="9" height="9"><defs><linearGradient id="eg17" x1="0" y1="0" x2="1" y2="1"><stop offset="0" stop-color="#fdfdfd"/><stop offset="1" stop-color="#d8d8dc"/></linearGradient></defs><rect x="0.5" y="0.5" width="8" height="8" rx="1.2" fill="url(#eg17)" stroke="#a8a8b0"/><path d="M2 4.5h5M4.5 2v5" stroke="#4a4a82" stroke-width="1"/></svg>
<svg style="left:17px;top:438px" width="4" height="1"><rect x="1" y="0" width="1" height="1" fill="#555"/></svg>
<svg style="left:21px;top:432px" width="13" height="11"><rect x="0" y="0" width="13" height="11" fill="#404040"/><rect x="0" y="0" width="13" height="2" fill="#2a2a2a"/><rect x="1" y="2" width="3" height="2" fill="#f4f4f4"/><rect x="5" y="2" width="3" height="2" fill="#f4f4f4"/><rect x="9" y="2" width="3" height="2" fill="#f4f4f4"/><rect x="1" y="5" width="3" height="2" fill="#f4f4f4"/><rect x="5" y="5" width="3" height="2" fill="#f4f4f4"/><rect x="9" y="5" width="3" height="2" fill="#f4f4f4"/><rect x="1" y="8" width="3" height="2" fill="#f4f4f4"/><rect x="5" y="8" width="3" height="2" fill="#f4f4f4"/><rect x="9" y="8" width="3" height="2" fill="#f4f4f4"/></svg>
<div class="a" style="left:206px;top:142px;width:1074px;height:578px;background:#fff;border-left:1px solid #9a9a9e;border-top:1px solid #8a8a8e"></div>
<div class="a" style="left:208px;top:165px;width:83px;height:18px;background:#5b7bd0"></div>
<div class="a" style="left:291px;top:165px;width:561px;height:18px;background:#6eafc8"></div>
<svg style="left:0;top:0" width="1280" height="720"><line x1="208" y1="183.5" x2="852" y2="183.5" stroke="#a4a4a4" stroke-dasharray="1 1"/><line x1="208" y1="202.5" x2="852" y2="202.5" stroke="#a4a4a4" stroke-dasharray="1 1"/><line x1="208" y1="221.5" x2="852" y2="221.5" stroke="#a4a4a4" stroke-dasharray="1 1"/><line x1="208" y1="240.5" x2="852" y2="240.5" stroke="#a4a4a4" stroke-dasharray="1 1"/><line x1="208" y1="257.5" x2="852" y2="257.5" stroke="#a4a4a4" stroke-dasharray="1 1"/><line x1="208" y1="275.5" x2="852" y2="275.5" stroke="#a4a4a4" stroke-dasharray="1 1"/><line x1="208" y1="293.5" x2="852" y2="293.5" stroke="#a4a4a4" stroke-dasharray="1 1"/><line x1="208" y1="311.5" x2="852" y2="311.5" stroke="#a4a4a4" stroke-dasharray="1 1"/><line x1="208" y1="328.5" x2="852" y2="328.5" stroke="#a4a4a4" stroke-dasharray="1 1"/><line x1="208" y1="346.5" x2="852" y2="346.5" stroke="#a4a4a4" stroke-dasharray="1 1"/><line x1="208" y1="364.5" x2="852" y2="364.5" stroke="#a4a4a4" stroke-dasharray="1 1"/><line x1="208" y1="382.5" x2="852" y2="382.5" stroke="#a4a4a4" stroke-dasharray="1 1"/><line x1="208" y1="399.5" x2="852" y2="399.5" stroke="#a4a4a4" stroke-dasharray="1 1"/><line x1="208" y1="417.5" x2="852" y2="417.5" stroke="#a4a4a4" stroke-dasharray="1 1"/><line x1="208" y1="435.5" x2="852" y2="435.5" stroke="#a4a4a4" stroke-dasharray="1 1"/><line x1="208" y1="453.5" x2="852" y2="453.5" stroke="#a4a4a4" stroke-dasharray="1 1"/><line x1="208" y1="471.5" x2="852" y2="471.5" stroke="#a4a4a4" stroke-dasharray="1 1"/><line x1="208" y1="488.5" x2="852" y2="488.5" stroke="#a4a4a4" stroke-dasharray="1 1"/><line x1="208" y1="506.5" x2="852" y2="506.5" stroke="#a4a4a4" stroke-dasharray="1 1"/><line x1="208" y1="524.5" x2="852" y2="524.5" stroke="#a4a4a4" stroke-dasharray="1 1"/><line x1="208" y1="542.5" x2="852" y2="542.5" stroke="#a4a4a4" stroke-dasharray="1 1"/><line x1="208" y1="559.5" x2="852" y2="559.5" stroke="#a4a4a4" stroke-dasharray="1 1"/><line x1="208" y1="577.5" x2="852" y2="577.5" stroke="#a4a4a4" stroke-dasharray="1 1"/><line x1="208" y1="595.5" x2="852" y2="595.5" stroke="#a4a4a4" stroke-dasharray="1 1"/><line x1="208" y1="613.5" x2="852" y2="613.5" stroke="#a4a4a4" stroke-dasharray="1 1"/><line x1="208" y1="630.5" x2="852" y2="630.5" stroke="#a4a4a4" stroke-dasharray="1 1"/><line x1="208" y1="648.5" x2="852" y2="648.5" stroke="#a4a4a4" stroke-dasharray="1 1"/><line x1="208" y1="666.5" x2="852" y2="666.5" stroke="#a4a4a4" stroke-dasharray="1 1"/><line x1="208" y1="684.5" x2="852" y2="684.5" stroke="#a4a4a4" stroke-dasharray="1 1"/><line x1="208" y1="702.5" x2="852" y2="702.5" stroke="#a4a4a4" stroke-dasharray="1 1"/><line x1="208" y1="719.5" x2="852" y2="719.5" stroke="#a4a4a4" stroke-dasharray="1 1"/><line x1="291.5" y1="144" x2="291.5" y2="165" stroke="#e8e8e8"/><line x1="291.5" y1="165" x2="291.5" y2="720" stroke="#c4c4c4" stroke-dasharray="1 1"/><line x1="478.5" y1="144" x2="478.5" y2="165" stroke="#e8e8e8"/><line x1="478.5" y1="165" x2="478.5" y2="720" stroke="#c4c4c4" stroke-dasharray="1 1"/><line x1="665.5" y1="144" x2="665.5" y2="165" stroke="#e8e8e8"/><line x1="665.5" y1="165" x2="665.5" y2="720" stroke="#c4c4c4" stroke-dasharray="1 1"/><line x1="852.5" y1="144" x2="852.5" y2="165" stroke="#e8e8e8"/><line x1="852.5" y1="165" x2="852.5" y2="720" stroke="#c4c4c4" stroke-dasharray="1 1"/></svg>
<div class="t" style="left:248px;top:148.5px;">TenantId</div>
<div class="t" style="left:295.5px;top:148.5px;font-size:11.5px">Subdomain</div>
<div class="t" style="left:482.5px;top:148.5px;">Description</div>
<div class="t" style="left:669.5px;top:148.5px;">DBName</div>
<div class="t" style="left:230px;width:60px;text-align:right;top:168.5px;color:#e6f6fa">1</div>
<div class="t" style="left:294px;top:168.5px;color:#e6f6fa">tenant1</div>
<div class="t" style="left:481px;top:168.5px;color:#e6f6fa">Tenant 1</div>
<div class="t" style="left:668px;top:168.5px;color:#e6f6fa">ChinookTenant1</div>
<div class="t" style="left:230px;width:60px;text-align:right;top:186.5px;color:#1e1e1e">2</div>
<div class="t" style="left:294px;top:186.5px;color:#1e1e1e">tenant2</div>
<div class="t" style="left:481px;top:186.5px;color:#3a3a3a">Tenant 2</div>
<div class="t" style="left:668px;top:186.5px;color:#3a3a3a">ChinookTenant2</div>
<div class="t" style="left:230px;width:60px;text-align:right;top:205.5px;color:#1e1e1e">3</div>
<div class="t" style="left:294px;top:205.5px;color:#1e1e1e">tenant3</div>
<div class="t" style="left:481px;top:205.5px;color:#3a3a3a">Tenant 3</div>
<div class="t" style="left:668px;top:205.5px;color:#3a3a3a">ChinookTenant3</div>
<svg style="left:2px;top:2px" width="16" height="16" viewBox="0 0 16 16"><path d="M0 1.5Q0 0 1.5 0H14.5Q16 0 16 1.5V11L11 16H1.5Q0 16 0 14.5z" fill="#e8581c"/><path d="M3 4h3.2q2.3 0 2.3 2.2v2.6q0 2.2-2.3 2.2H3z" fill="none" stroke="#fff" stroke-width="1.3"/><path d="M8.8 4.6H13M8.8 7.6H12.4M8.8 4v7" stroke="#fff" stroke-width="1.3" fill="none"/></svg>
<svg style="left:24px;top:50px" width="14" height="14" viewBox="0 0 14 14"><path d="M5.5 2.5h4l3 3v8h-9v-6" fill="none" stroke="#3a3a3a" stroke-width="1.3"/><path d="M9.5 2v4h3.5z" fill="#3a3a3a"/><circle cx="3.2" cy="3.5" r="1.6" fill="#e0a030"/><path d="M3.2 0.3v6.4M0 3.5h6.4M1 1.3l4.4 4.4M5.4 1.3l-4.4 4.4" stroke="#e0a030" stroke-width="0.8"/></svg>
<svg style="left:45px;top:50px" width="14" height="14" viewBox="0 0 14 14"><path d="M1 6.5h5l1-1h6v8H1z" fill="none" stroke="#dcb67a" stroke-width="1"/><path d="M1 13.5l1.5-5h11l-1.5 5z" fill="#dcb67a"/><path d="M1.5 6.5q0-4 4-4" fill="none" stroke="#1c62b4" stroke-width="1.7"/><path d="M4 0l3.5 2.5L4 5z" fill="#1c62b4"/></svg>
<svg style="left:72px;top:51px" width="12" height="12" viewBox="0 0 12 12"><path d="M0 0h9.5l2.5 2.5V12H0z" fill="#858585"/><rect x="3" y="0" width="5" height="4" fill="#eeeef2"/><rect x="5.5" y="0.6" width="1.3" height="2.4" fill="#858585"/></svg>
<svg style="left:91px;top:50px" width="15" height="14" viewBox="0 0 15 14"><path d="M6 0h7l2 2v6H6z" fill="#00539c"/><rect x="8" y="0" width="4" height="3" fill="#eeeef2"/><rect x="10" y="0.5" width="1" height="2" fill="#00539c"/><path d="M0 6h7l2 2v6H0z" fill="#00539c" stroke="#eeeef2" stroke-width="0.8"/><rect x="2" y="6.4" width="4" height="3" fill="#eeeef2"/><rect x="4" y="6.9" width="1" height="2" fill="#00539c"/></svg>
<svg style="left:118px;top:50px" width="13" height="14" viewBox="0 0 13 14"><path d="M3 1l4 8M10 1L6 9" stroke="#a8a8a8" stroke-width="1.3" fill="none"/><circle cx="3" cy="11" r="2.3" fill="none" stroke="#a8a8a8" stroke-width="1.2"/><circle cx="10" cy="11" r="2.3" fill="none" stroke="#a8a8a8" stroke-width="1.2"/></svg>
<svg style="left:139px;top:50px" width="13" height="14" viewBox="0 0 13 14"><path d="M5.5 2.5V0.5h4l3 3V9.5h-2" fill="none" stroke="#4a4a4a" stroke-width="1.2"/><path d="M0.6 4.6h5l2.8 2.8v6H0.6z" fill="#eeeef2" stroke="#4a4a4a" stroke-width="1.2"/><path d="M5.6 4.6v3h2.8" fill="none" stroke="#4a4a4a" stroke-width="1"/></svg>
<svg style="left:159px;top:50px" width="12" height="14" viewBox="0 0 12 14"><path d="M3.5 2.5h1.5l1-2h1l1 2h2v11h-3" fill="none" stroke="#a8a8a8" stroke-width="1.1"/><rect x="0.6" y="7.6" width="5" height="5.8" fill="none" stroke="#a8a8a8" stroke-width="1.1"/></svg>
<svg style="left:179px;top:50px" width="14" height="13" viewBox="0 0 14 13"><path d="M1.5 1.5l11 10M12.5 1.5l-11 10" stroke="#8a8a8a" stroke-width="1.8"/></svg>
<svg style="left:206px;top:50px" width="13" height="13" viewBox="0 0 13 13"><path d="M2.5 4.5Q7 1 10 3.5Q12.5 6 9.5 9L5 12.5" fill="none" stroke="#7a7a7a" stroke-width="1.8"/><path d="M0 1.5v5.5h5.5z" fill="#7a7a7a"/></svg>
<svg style="left:226px;top:50px" width="13" height="13" viewBox="0 0 13 13"><path d="M10.5 4.5Q6 1 3 3.5Q0.5 6 3.5 9L8 12.5" fill="none" stroke="#7a7a7a" stroke-width="1.8"/><path d="M13 1.5v5.5H7.5z" fill="#7a7a7a"/></svg>
<svg style="left:254px;top:52px" width="11" height="11" viewBox="0 0 11 11"><rect x="0.6" y="0.6" width="9.8" height="9.8" fill="none" stroke="#8a8a8a" stroke-width="1.2"/><circle cx="5.5" cy="5.5" r="2.6" fill="#8a8a8a"/></svg>
<svg style="left:278px;top:51px" width="14" height="12" viewBox="0 0 14 12"><rect x="3" y="0.5" width="8" height="3" fill="none" stroke="#5a5a5a" stroke-width="1"/><rect x="0" y="3.5" width="14" height="5" rx="0.5" fill="#5a5a5a"/><rect x="3" y="7.5" width="8" height="4" fill="#eeeef2" stroke="#5a5a5a" stroke-width="1"/><rect x="1" y="4.5" width="2" height="1" fill="#aaa"/></svg>
<svg style="left:320px;top:49px" width="17" height="16" viewBox="0 0 17 16"><rect x="0.6" y="0.6" width="8" height="10" fill="#eeeef2" stroke="#8a8a8a" stroke-width="1.2"/><path d="M2 3h5M2 5h3M2 7h3M2 9h3" stroke="#8a8a8a" stroke-width="0.9"/><rect x="5.6" y="6.1" width="10" height="9" fill="#f4f4f4" stroke="#8a8a8a" stroke-width="1.2"/><rect x="5" y="5.5" width="11" height="2" fill="#8a8a8a"/><path d="M7.5 10h2M7.5 12.5h2M10.5 10h3.5M10.5 12.5h3.5" stroke="#6a6a6a" stroke-width="1.3"/></svg>
<svg style="left:348px;top:50px" width="14" height="14" viewBox="0 0 14 14"><rect x="0.6" y="0.6" width="12.8" height="12.8" fill="#fff" stroke="#404040" stroke-width="1.2"/><rect x="0" y="0" width="14" height="2.5" fill="#303030"/><path d="M2.5 4h2.5q2 0 2 2v2.5q0 2-2 2H2.5z" fill="none" stroke="#e8581c" stroke-width="1.5"/><path d="M7.5 4.5h4M7.5 7h3.5M7.5 4v6.5" stroke="#e8581c" stroke-width="1.5" fill="none"/></svg>
<svg style="left:368px;top:50px" width="14" height="14" viewBox="0 0 14 14"><rect x="0.6" y="0.6" width="12.8" height="12.8" fill="#f8f4ec" stroke="#404040" stroke-width="1.2"/><rect x="0" y="0" width="14" height="2.5" fill="#303030"/><path d="M4 3.5l3 3-3 3-3-3z" fill="#d99a2a"/><path d="M9.5 6.5l2 2-2 2-2-2z" fill="#e0b050"/><path d="M9.5 9.5l2 2-2 2-2-2z" fill="#e0b050"/></svg>
<svg style="left:389px;top:50px" width="14" height="14" viewBox="0 0 14 14"><path d="M5.5 1.5q3-1.5 8 0V8q-4 1.8-8 0z" fill="#3a3a3a"/><ellipse cx="9.5" cy="1.8" rx="4" ry="1.3" fill="#888"/><circle cx="4" cy="6.5" r="1.5" fill="#3a3a3a"/><path d="M4 7v3M1.5 12.5v-2.5h5v2.5" fill="none" stroke="#3a3a3a" stroke-width="1"/><rect x="0" y="11.5" width="3" height="2" fill="#3a3a3a"/><rect x="5" y="11.5" width="3" height="2" fill="#3a3a3a"/></svg>
<svg style="left:409px;top:50px" width="14" height="14" viewBox="0 0 14 14"><rect x="3.6" y="0.6" width="9.8" height="12.4" fill="#f4f4f4" stroke="#6a6a6a" stroke-width="1.2"/><path d="M5 2.8h2.2M8.3 2.8h3.9M5 5.3h2.2M8.3 5.3h3.9M5 7.8h2.2M8.3 7.8h3.9M5 10.3h2.2M8.3 10.3h3.9" stroke="#5a5a5a" stroke-width="1.3"/><path d="M2 7.5v6" stroke="#3a3a3a" stroke-width="1.8"/><path d="M0.3 6.5v2.2h3.4V6.5" fill="none" stroke="#3a3a3a" stroke-width="1.2"/></svg>
<svg style="left:430px;top:50px" width="14" height="14" viewBox="0 0 14 14"><path d="M7 0.5C2.5 0.5 0 3.5 0 7s2.5 6.5 6.5 6.5c2 0 2-1 1.5-2.5-.5-1.5 1-2.5 2.5-2 2 .5 3.5 0 3.5-2C14 3.5 11 0.5 7 0.5z" fill="#3c3c3c"/><circle cx="3" cy="5" r="0.9" fill="#bbb"/><circle cx="5.5" cy="2.8" r="0.9" fill="#bbb"/><circle cx="2.5" cy="8.5" r="0.9" fill="#bbb"/><circle cx="4" cy="11" r="0.9" fill="#bbb"/></svg>
<svg style="left:449px;top:50px" width="16" height="14" viewBox="0 0 16 14"><rect x="6" y="0" width="9" height="2" fill="#3c3c3c"/><rect x="4" y="2.5" width="9" height="2" fill="#3c3c3c"/><path d="M14.5 2v8" stroke="#3c3c3c"/><rect x="0" y="5" width="9" height="9" fill="#3c3c3c"/><path d="M1 8h2v1.5H1zM4 8h2v1.5H4zM1 11h2v1.5H1zM4 11h2v1.5H4z" fill="#fff"/><circle cx="10" cy="9" r="2.7" fill="#eeeef2" stroke="#3c3c3c" stroke-width="1.2"/><path d="M12 11l3 3" stroke="#3c3c3c" stroke-width="1.5"/></svg>
<svg style="left:476px;top:50px" width="14" height="14" viewBox="0 0 14 14"><path d="M5.5 3V0.6h5l3 3V12.4H9" fill="none" stroke="#555" stroke-width="1.2"/><path d="M10.5 0.5v3.5h3z" fill="#555"/><rect x="0" y="8" width="7" height="6" fill="#3c3c3c"/><rect x="1.5" y="10" width="4" height="2" fill="#ccc"/></svg>
<svg style="left:518px;top:51px" width="17" height="12" viewBox="0 0 17 12"><path d="M0 6.5h4" stroke="#1c62b4" stroke-width="2"/><path d="M3.5 3l3.5 3.5L3.5 10z" fill="#1c62b4"/><path d="M12 0.6l4.4 2.4v5.5L12 11l-4.4-2.5V3z" fill="none" stroke="#3c3c3c" stroke-width="1.1"/><path d="M7.6 3L12 5.5l4.4-2.5M12 5.5V11" fill="none" stroke="#3c3c3c" stroke-width="1.1"/></svg>
<svg style="left:540px;top:50px" width="14" height="14" viewBox="0 0 14 14"><path d="M0.5 1l3 3M3.5 3.5l2 2M6 1.5Q11 1 11 6" stroke="#3c3c3c" stroke-width="1.8" fill="none"/><path d="M8.5 5.5l2.5 3 2.5-3z" fill="#3c3c3c"/><path d="M0 4h3v3z" fill="#3c3c3c"/><rect x="0" y="10.5" width="3.5" height="3" fill="#3c3c3c"/><rect x="5" y="10.5" width="3.5" height="3" fill="#3c3c3c"/><rect x="10" y="10.5" width="3.5" height="3" fill="#3c3c3c"/></svg>
<svg style="left:565px;top:50px" width="16" height="14" viewBox="0 0 16 14"><rect x="0.6" y="0.6" width="14.8" height="12.8" fill="#f4f4f4" stroke="#6a6a6a" stroke-width="1.2"/><rect x="0" y="0" width="16" height="2" fill="#3a3a3a"/><path d="M4.5 4.5l4 8h-8z" fill="#f0c22a"/><path d="M4.5 7v3M4.5 11v1" stroke="#222" stroke-width="1"/><path d="M9 7.5l2 2.5 3-6" fill="none" stroke="#222" stroke-width="1.4"/></svg>
<svg style="left:588px;top:50px" width="11" height="14" viewBox="0 0 11 14"><path d="M3.5 2h1.5l0.5-1.5h1l0.5 1.5h1.5v1h-5z" fill="none" stroke="#555" stroke-width="1"/><path d="M2.5 2.5H0.6v10.9h9.8V2.5H8.5" fill="none" stroke="#555" stroke-width="1.2"/><path d="M2.5 7.5l2 3 4-6" fill="none" stroke="#222" stroke-width="1.5"/></svg>
<svg style="left:607px;top:50px" width="14" height="14" viewBox="0 0 14 14"><path d="M7 1H1v12h6" fill="none" stroke="#707070" stroke-width="1.6"/><path d="M3 7h6" stroke="#1e1e1e" stroke-width="2.2"/><path d="M8.5 3.5l4.5 3.5-4.5 3.5z" fill="#1e1e1e"/></svg>
<svg style="left:628px;top:50px" width="13" height="14" viewBox="0 0 13 14"><path d="M2 5V0.6h6l3.4 3.4V12.4H7" fill="none" stroke="#3c3c3c" stroke-width="1.2"/><path d="M8 0.5v4h3.5z" fill="#3c3c3c"/><circle cx="5" cy="8.8" r="2.3" fill="none" stroke="#1c62b4" stroke-width="1.3"/><path d="M3.3 10.5L0.7 13.2" stroke="#1c62b4" stroke-width="1.5"/></svg>
<svg style="left:672px;top:50px" width="11" height="13" viewBox="0 0 11 13"><path d="M3 0h8v13l-3.5-3-3.5 3V8" fill="#7a7a7a"/><rect x="0" y="3" width="8" height="5" fill="#7a7a7a" stroke="#eeeef2" stroke-width="0.8"/><path d="M1.5 5.5h2M6 4.3v2.4" stroke="#eee" stroke-width="1"/></svg>
<svg style="left:697px;top:50px" width="14" height="14" viewBox="0 0 14 14"><path d="M6 0h8v13l-4-3.2L6 13z" fill="#7a7a7a"/><rect x="0" y="3" width="1.6" height="6" fill="#7a7a7a"/><path d="M2.5 6L6 3v2h4v2H6v2z" fill="#eeeef2" stroke="#7a7a7a" stroke-width="0.6"/></svg>
<svg style="left:719px;top:50px" width="13" height="14" viewBox="0 0 13 14"><path d="M4 0h8v13l-4-3.2L4 13z" fill="#7a7a7a"/><path d="M0 6l3.8-3v2h4v2h-4v2z" fill="#7a7a7a" stroke="#eeeef2" stroke-width="0.6"/></svg>
<svg style="left:738px;top:50px" width="13" height="14" viewBox="0 0 13 14"><path d="M0 0h8v13l-4-3.2L0 13z" fill="#7a7a7a"/><path d="M13 6l-3.8-3v2h-4v2h4v2z" fill="#7a7a7a" stroke="#eeeef2" stroke-width="0.6"/></svg>
<svg style="left:758px;top:50px" width="14" height="14" viewBox="0 0 14 14"><path d="M0 0h8v13l-4-3.2L0 13z" fill="#7a7a7a"/><rect x="12.4" y="3" width="1.6" height="6" fill="#7a7a7a"/><path d="M11.5 6L8 3v2H4v2h4v2z" fill="#eeeef2" stroke="#7a7a7a" stroke-width="0.6"/></svg>
<svg style="left:785px;top:50px" width="14" height="14" viewBox="0 0 14 14"><path d="M5 2h6v12l-3-2.5-3 2.5z" fill="#b0b0b0"/><path d="M9 3h4v10" stroke="#c4c4c4" stroke-width="1.2" fill="none"/><path d="M0.5 0.5l4 4M4.5 0.5l-4 4" stroke="#8a8a8a" stroke-width="1.1"/></svg>
<svg style="left:829px;top:50px" width="13" height="13" viewBox="0 0 13 13"><circle cx="8" cy="5" r="4.2" fill="none" stroke="#707070" stroke-width="1.4"/><path d="M5 8l-4 4" stroke="#707070" stroke-width="2"/></svg>
<svg style="left:850px;top:50px" width="13" height="13" viewBox="0 0 13 13"><circle cx="8.5" cy="7.5" r="3.5" fill="none" stroke="#7a7a7a" stroke-width="1.3"/><path d="M6 10L2.5 13" stroke="#7a7a7a" stroke-width="1.6"/><path d="M0 3l3-3v2h3v2H3v2z" fill="#7a7a7a"/></svg>
<svg style="left:870px;top:50px" width="13" height="13" viewBox="0 0 13 13"><circle cx="8.5" cy="7.5" r="3.5" fill="none" stroke="#7a7a7a" stroke-width="1.3"/><path d="M6 10L2.5 13" stroke="#7a7a7a" stroke-width="1.6"/><path d="M7 3L4 0v2H0v2h4v2z" fill="#7a7a7a"/></svg>
<svg style="left:889px;top:50px" width="14" height="14" viewBox="0 0 14 14"><path d="M4 2.5V0.6h4.5l2 2" fill="none" stroke="#555" stroke-width="1"/><path d="M0.6 3.6h6" stroke="#3c3c3c" stroke-width="1.2"/><rect x="0.6" y="3.6" width="4" height="9" fill="none" stroke="#3c3c3c" stroke-width="1.2"/><path d="M1.5 6.5h2M1.5 9h2" stroke="#3c3c3c"/><circle cx="8" cy="8" r="3.4" fill="#eeeef2" stroke="#3c3c3c" stroke-width="1.4"/><path d="M10.5 10.5l3 3" stroke="#3c3c3c" stroke-width="1.8"/></svg>
<svg style="left:916px;top:50px" width="14" height="14" viewBox="0 0 14 14"><path d="M5.5 1H2.8Q1.8 1 1.8 2V5.5" fill="none" stroke="#6a6a6a" stroke-width="1.3"/><path d="M0 5h3.8l-1.9 2.6z" fill="#6a6a6a"/><path d="M7 2.2h2v2.8H7.2v-1.2h1.3" fill="none" stroke="#6a6a6a" stroke-width="1.1"/><path d="M10.6 0.5v4.5h2.2V2.8h-2" fill="none" stroke="#6a6a6a" stroke-width="1.1"/><rect x="0" y="8" width="9.5" height="5.5" fill="#7a7a7a"/><path d="M1.5 9.5h2v3h-2zM6 9.5h2v3H6z" fill="#e8e8e8"/><path d="M5 8v5.5" stroke="#7a7a7a"/></svg>
<svg style="left:936px;top:50px" width="15" height="14" viewBox="0 0 15 14"><path d="M8 1h2.5l1 1H14v4H8z" fill="#e0b46a"/><path d="M1 6h3l1 1h4v6.5H1z" fill="#e0b46a"/><path d="M2 4.5Q1.5 1.5 5.5 1.2" fill="none" stroke="#1a4f8c" stroke-width="1.8"/></svg>
<svg style="left:979px;top:49px" width="16" height="16" viewBox="0 0 16 16"><circle cx="8" cy="8" r="7.6" fill="#3e70b8"/><path d="M5.3 6q0-3 2.7-3t2.7 2.5q0 1.5-1.5 2.3-1 .6-1 1.9" fill="none" stroke="#fff" stroke-width="1.7"/><circle cx="8.2" cy="12.3" r="1.1" fill="#fff"/></svg>
<svg style="left:1000px;top:50px" width="14" height="14" viewBox="0 0 14 14"><path d="M7 1.2A5.8 5.8 0 1 1 7 12.8A5.8 5.8 0 1 1 7 1.2zM7 4.4A2.6 2.6 0 1 0 7 9.6A2.6 2.6 0 1 0 7 4.4z" fill="#4a4a4a" fill-rule="evenodd"/><circle cx="7" cy="7" r="4.1" fill="none" stroke="#b8b8b8" stroke-width="0.7"/><rect x="7.4" y="6.2" width="7" height="1.6" fill="#eeeef2"/><rect x="6" y="0" width="1.1" height="4.8" fill="#eeeef2"/><path d="M6.3 5.5l1-.6v3.5" fill="none" stroke="#4a4a4a" stroke-width="0.9"/></svg>
<svg style="left:1021px;top:51px" width="14" height="12" viewBox="0 0 14 12"><rect x="0.6" y="0.6" width="12.8" height="10.8" fill="none" stroke="#555" stroke-width="1.2"/><path d="M3 3h3v1.5H3zM8 3h3v1.5H8zM3 6h3v1.5H3zM8 6h3v1.5H8zM3 9h3v1H3zM8 9h3v1H8z" fill="#555"/></svg>
<svg style="left:107px;top:74px" width="14" height="14" viewBox="0 0 14 14"><path d="M7 0v5" stroke="#3a3a3a" stroke-width="1.8"/><path d="M3.5 3.5L7 7l3.5-3.5z" fill="#3a3a3a"/><path d="M0.7 5v8.3h12.6V5" fill="none" stroke="#555" stroke-width="1.3"/><rect x="3" y="8" width="1.6" height="1.6" fill="#3a3a3a"/><rect x="6.2" y="8" width="1.6" height="1.6" fill="#3a3a3a"/><rect x="9.4" y="8" width="1.6" height="1.6" fill="#3a3a3a"/><rect x="4.5" y="10.5" width="1.6" height="1.6" fill="#3a3a3a"/><rect x="8" y="10.5" width="1.6" height="1.6" fill="#3a3a3a"/></svg>
<svg style="left:128px;top:75px" width="13" height="13" viewBox="0 0 13 13"><circle cx="6.5" cy="6.5" r="6.4" fill="#2f8c32"/><path d="M5 3.5l4.5 3-4.5 3z" fill="#fff" stroke="#fff" stroke-width="0.5"/></svg>
<svg style="left:149px;top:75px" width="13" height="13" viewBox="0 0 13 13"><circle cx="6.5" cy="6.5" r="6.4" fill="#7e7e7e"/><rect x="4" y="3.6" width="1.8" height="5.8" fill="#fff"/><rect x="7.2" y="3.6" width="1.8" height="5.8" fill="#fff"/></svg>
<svg style="left:170px;top:76px" width="11" height="11" viewBox="0 0 11 11"><rect x="0" y="1" width="2.5" height="9" fill="#b4b4b4"/><path d="M4 0.5l6.5 5-6.5 5z" fill="#b4b4b4"/></svg>
<svg style="left:196px;top:76px" width="13" height="12" viewBox="0 0 13 12"><path d="M1 5Q5 0 10 3.5" fill="none" stroke="#7a7a7a" stroke-width="1.8"/><path d="M12.5 1.5v5h-5z" fill="#7a7a7a"/><circle cx="6" cy="10" r="1.8" fill="#7a7a7a"/></svg>
<svg style="left:219px;top:76px" width="7" height="12" viewBox="0 0 7 12"><path d="M3.5 0v4" stroke="#7a7a7a" stroke-width="2"/><path d="M0 3h7l-3.5 3.6z" fill="#7a7a7a"/><circle cx="3.5" cy="10" r="1.9" fill="#7a7a7a"/></svg>
<svg style="left:240px;top:76px" width="7" height="12" viewBox="0 0 7 12"><path d="M3.5 2.5v5" stroke="#7a7a7a" stroke-width="2"/><path d="M0 3.6h7L3.5 0z" fill="#7a7a7a"/><circle cx="3.5" cy="10" r="1.9" fill="#7a7a7a"/></svg>
<svg style="left:257px;top:76px" width="15" height="11" viewBox="0 0 15 11"><path d="M0.8 0.5l6 4.8-6 4.8z" fill="#9a9a9a"/><path d="M9.5 0.5h3M11 0.5v9.5M9.5 10h3" stroke="#9a9a9a" stroke-width="1"/></svg>
<svg style="left:278px;top:75px" width="13" height="13" viewBox="0 0 13 13"><path d="M6 4A2.5 2.5 0 1 0 3 1.5" fill="none" stroke="#7a7a7a" stroke-width="1.3"/><path d="M0.5 2l2.5-2.2v4z" fill="#5a5a5a"/><path d="M6.5 5v8M10 5v8M4.5 7.5h8M4.5 10.7h8" stroke="#5a5a5a" stroke-width="1.3"/></svg>
<svg style="left:304px;top:75px" width="12" height="13" viewBox="0 0 12 13"><path d="M2 6Q0 2 3.5 1.5T7 4" fill="none" stroke="#8a8a8a" stroke-width="1.6"/><path d="M5 3h4v-3z" fill="#8a8a8a"/><path d="M7 7.5l5 3-5 3z" fill="#a0a0a0"/></svg>
<svg style="left:324px;top:75px" width="14" height="14" viewBox="0 0 14 14"><circle cx="7" cy="6.7" r="6.3" fill="none" stroke="#9a9a9a" stroke-width="1"/><rect x="4" y="3.7" width="6" height="6" fill="#8a8a8a"/></svg>
<svg style="left:367px;top:74px" width="15" height="15" viewBox="0 0 15 15"><rect x="2.6" y="1.1" width="11" height="9.5" fill="none" stroke="#444" stroke-width="1.2"/><rect x="2" y="0.5" width="12.2" height="2.2" fill="#303030"/><circle cx="4.5" cy="9.3" r="4.3" fill="#e8220a"/></svg>
<svg style="left:387px;top:75px" width="15" height="13" viewBox="0 0 15 13"><rect x="3" y="0.5" width="11.5" height="2" fill="#7a7a7a"/><rect x="0.6" y="2.6" width="12" height="9" fill="#eeeef2" stroke="#555" stroke-width="1.2"/><path d="M0.8 3l6 4 6-4" fill="none" stroke="#555" stroke-width="1"/><path d="M13.5 2v5" stroke="#7a7a7a" stroke-width="1"/><circle cx="10.5" cy="11" r="1.5" fill="none" stroke="#888" stroke-width="0.8"/><circle cx="13" cy="11" r="1.5" fill="none" stroke="#888" stroke-width="0.8"/></svg>
<svg style="left:414px;top:75px" width="14" height="14" viewBox="0 0 14 14"><path d="M2 0.6H0.6v5.8H2M12 0.6h1.4v5.8H12" fill="none" stroke="#8a8a8a" stroke-width="1.1"/><ellipse cx="7" cy="3.5" rx="3.5" ry="2.6" fill="#8a8a8a"/><circle cx="5" cy="11.3" r="1.7" fill="none" stroke="#9a9a9a" stroke-width="0.9"/><circle cx="9" cy="11.3" r="1.7" fill="none" stroke="#9a9a9a" stroke-width="0.9"/><path d="M5 9l2-1.5 2 1.5" fill="none" stroke="#9a9a9a" stroke-width="0.8"/></svg>
<svg style="left:435px;top:75px" width="14" height="14" viewBox="0 0 14 14"><path d="M2 0.6H0.6v5.8H2M12 0.6h1.4v5.8H12" fill="none" stroke="#8a8a8a" stroke-width="1.1"/><ellipse cx="7" cy="3.5" rx="3.3" ry="3" fill="none" stroke="#8a8a8a" stroke-width="1.1"/><path d="M7 0.5v6M5.3 1v5M8.7 1v5" stroke="#8a8a8a" stroke-width="0.8"/><circle cx="5" cy="11.3" r="1.7" fill="none" stroke="#9a9a9a" stroke-width="0.9"/><circle cx="9" cy="11.3" r="1.7" fill="none" stroke="#9a9a9a" stroke-width="0.9"/></svg>
<svg style="left:455px;top:76px" width="14" height="10" viewBox="0 0 14 10"><circle cx="3" cy="7" r="2.3" fill="none" stroke="#7a7a7a" stroke-width="1.4"/><circle cx="11" cy="7" r="2.3" fill="none" stroke="#7a7a7a" stroke-width="1.4"/><path d="M5.2 6.5h3.6M1 6L4 1.5M13 6L10 1.5" fill="none" stroke="#7a7a7a" stroke-width="1.2"/></svg>
<svg style="left:476px;top:75px" width="13" height="13" viewBox="0 0 13 13"><rect x="1.6" y="0.6" width="10.8" height="9.8" fill="#fff" stroke="#707070" stroke-width="1.2"/><rect x="1" y="0" width="12" height="2.2" fill="#707070"/><path d="M5.5 2v8.5M9 2v8.5M2 4.5h10M2 7.5h10" stroke="#707070" stroke-width="1"/><circle cx="2.5" cy="11" r="1.6" fill="#eeeef2" stroke="#8a8a8a" stroke-width="0.9"/><circle cx="6" cy="11" r="1.6" fill="#eeeef2" stroke="#8a8a8a" stroke-width="0.9"/></svg>
<svg style="left:502px;top:75px" width="14" height="13" viewBox="0 0 14 13"><rect x="2" y="0" width="12" height="2.4" fill="#707070"/><rect x="3.5" y="4.5" width="10.5" height="2.4" fill="#707070"/><rect x="3.5" y="9" width="10.5" height="2.4" fill="#707070"/><path d="M2 3.8H0.8v8.5h1.5" fill="none" stroke="#707070" stroke-width="1.3"/></svg>
<svg style="left:545px;top:74px" width="14" height="14" viewBox="0 0 14 14"><rect x="3" y="0.5" width="10.5" height="10" fill="#fff" stroke="#3a3a3a" stroke-width="1.2"/><rect x="3" y="0" width="11" height="2.5" fill="#3a3a3a"/><path d="M9 2.5v8M9 5h4.5M9 7.5h4.5" stroke="#3a3a3a" stroke-width="1.1"/><path d="M0 5.5q3.5-1.5 7 0v7.5q-3.5 1.5-7 0z" fill="#3a3a3a"/><ellipse cx="3.5" cy="5.5" rx="3.5" ry="1.2" fill="#8a8a8a"/></svg>
<svg style="left:565px;top:74px" width="15" height="14" viewBox="0 0 15 14"><path d="M4.5 0.5h2.6v2.6H4.5zM8.2 0.5h2.6v2.6H8.2zM11.9 0.5h2.6v2.6h-2.6zM8.2 4.2h2.6v2.6H8.2zM11.9 4.2h2.6v2.6h-2.6zM8.2 7.9h2.6v2.6H8.2zM11.9 7.9h2.6v2.6h-2.6z" fill="#3a3a3a"/><path d="M0 5.5q3.5-1.5 7 0v7.5q-3.5 1.5-7 0z" fill="#3a3a3a"/><ellipse cx="3.5" cy="5.5" rx="3.5" ry="1.2" fill="#8a8a8a"/></svg>
<svg style="left:586px;top:74px" width="14" height="14" viewBox="0 0 14 14"><circle cx="9.5" cy="4.5" r="4.2" fill="#eeeef2" stroke="#555" stroke-width="1"/><path d="M9.5 0.5v8M5.5 4.5h8M6.5 2.5h6M6.5 6.5h6" stroke="#777" stroke-width="0.6"/><circle cx="3.5" cy="6.5" r="2.4" fill="#2a2a2a"/><path d="M0 14v-4h2l1.5 2 1.5-2h2v4z" fill="#2a2a2a"/></svg>
<svg style="left:5px;top:117px" width="15" height="15" viewBox="0 0 15 15"><rect x="1.5" y="3.5" width="12.5" height="11" fill="#3a3a3a"/><rect x="2.50" y="6.00" width="2.83" height="1.50" fill="#fff"/><rect x="6.33" y="6.00" width="2.83" height="1.50" fill="#fff"/><rect x="10.17" y="6.00" width="2.83" height="1.50" fill="#fff"/><rect x="2.50" y="8.50" width="2.83" height="1.50" fill="#fff"/><rect x="6.33" y="8.50" width="2.83" height="1.50" fill="#fff"/><rect x="10.17" y="8.50" width="2.83" height="1.50" fill="#fff"/><rect x="2.50" y="11.00" width="2.83" height="1.50" fill="#fff"/><rect x="6.33" y="11.00" width="2.83" height="1.50" fill="#fff"/><rect x="10.17" y="11.00" width="2.83" height="1.50" fill="#fff"/><circle cx="3" cy="3" r="2.6" fill="#d9a53f"/></svg>
<svg style="left:26px;top:117px" width="15" height="15" viewBox="0 0 15 15"><rect x="0" y="3.5" width="12" height="11" fill="#3a3a3a"/><rect x="1.00" y="6.00" width="2.67" height="1.50" fill="#fff"/><rect x="4.67" y="6.00" width="2.67" height="1.50" fill="#fff"/><rect x="8.33" y="6.00" width="2.67" height="1.50" fill="#fff"/><rect x="1.00" y="8.50" width="2.67" height="1.50" fill="#fff"/><rect x="4.67" y="8.50" width="2.67" height="1.50" fill="#fff"/><rect x="8.33" y="8.50" width="2.67" height="1.50" fill="#fff"/><rect x="1.00" y="11.00" width="2.67" height="1.50" fill="#fff"/><rect x="4.67" y="11.00" width="2.67" height="1.50" fill="#fff"/><rect x="8.33" y="11.00" width="2.67" height="1.50" fill="#fff"/><path d="M7 11l6.5-6.5" stroke="#1c62b4" stroke-width="2.4"/><path d="M12 3l1.5-1.5 1.5 1.5-1.5 1.5z" fill="#1c62b4"/><path d="M6 12.5l1-2 1 1z" fill="#1c62b4"/></svg>
<svg style="left:47px;top:118px" width="14" height="15" viewBox="0 0 14 15"><rect x="3.5" y="0.5" width="10" height="8.5" fill="#3a3a3a"/><rect x="4.50" y="3.00" width="2.00" height="0.67" fill="#fff"/><rect x="7.50" y="3.00" width="2.00" height="0.67" fill="#fff"/><rect x="10.50" y="3.00" width="2.00" height="0.67" fill="#fff"/><rect x="4.50" y="4.67" width="2.00" height="0.67" fill="#fff"/><rect x="7.50" y="4.67" width="2.00" height="0.67" fill="#fff"/><rect x="10.50" y="4.67" width="2.00" height="0.67" fill="#fff"/><rect x="4.50" y="6.33" width="2.00" height="0.67" fill="#fff"/><rect x="7.50" y="6.33" width="2.00" height="0.67" fill="#fff"/><rect x="10.50" y="6.33" width="2.00" height="0.67" fill="#fff"/><circle cx="3.5" cy="8" r="2.9" fill="#eeeef2" stroke="#3a3a3a" stroke-width="1.2"/><path d="M5.5 10l3.5 3.5" stroke="#3a3a3a" stroke-width="1.6"/></svg>
<svg style="left:72px;top:118px" width="16" height="15" viewBox="0 0 16 15"><rect x="5" y="0.5" width="9" height="7" fill="#3a3a3a"/><rect x="6.00" y="2.50" width="1.67" height="0.33" fill="#fff"/><rect x="8.67" y="2.50" width="1.67" height="0.33" fill="#fff"/><rect x="11.33" y="2.50" width="1.67" height="0.33" fill="#fff"/><rect x="6.00" y="3.83" width="1.67" height="0.33" fill="#fff"/><rect x="8.67" y="3.83" width="1.67" height="0.33" fill="#fff"/><rect x="11.33" y="3.83" width="1.67" height="0.33" fill="#fff"/><rect x="6.00" y="5.17" width="1.67" height="0.33" fill="#fff"/><rect x="8.67" y="5.17" width="1.67" height="0.33" fill="#fff"/><rect x="11.33" y="5.17" width="1.67" height="0.33" fill="#fff"/><rect x="0" y="4.5" width="9" height="8.5" fill="#3a3a3a"/><rect x="1.00" y="6.50" width="1.67" height="0.83" fill="#fff"/><rect x="3.67" y="6.50" width="1.67" height="0.83" fill="#fff"/><rect x="6.33" y="6.50" width="1.67" height="0.83" fill="#fff"/><rect x="1.00" y="8.33" width="1.67" height="0.83" fill="#fff"/><rect x="3.67" y="8.33" width="1.67" height="0.83" fill="#fff"/><rect x="6.33" y="8.33" width="1.67" height="0.83" fill="#fff"/><rect x="1.00" y="10.17" width="1.67" height="0.83" fill="#fff"/><rect x="3.67" y="10.17" width="1.67" height="0.83" fill="#fff"/><rect x="6.33" y="10.17" width="1.67" height="0.83" fill="#fff"/><circle cx="11" cy="10.5" r="3.2" fill="none" stroke="#1c62b4" stroke-width="1.8" stroke-dasharray="4 1.2"/></svg>
<svg style="left:98px;top:117px" width="16" height="16" viewBox="0 0 16 16"><rect x="0" y="0.5" width="6.5" height="6" fill="#3a3a3a"/><rect x="9" y="0.5" width="6" height="6" fill="#3a3a3a"/><path d="M1.7 5.5l1.6-4 1.6 4M2.3 4h2" stroke="#fff" stroke-width="0.9" fill="none"/><path d="M11 2h2l-2 3h2" stroke="#fff" stroke-width="0.9" fill="none"/><rect x="3" y="8.5" width="9" height="7" fill="#3a3a3a"/><path d="M4.5 12h3M5.5 10.5L4.2 12l1.3 1.5M8.5 10h2v4h-2" stroke="#fff" stroke-width="0.9" fill="none"/></svg>
<div class="a" style="left:116px;top:115px;width:21px;height:21px;border:1px solid #8cb8e0;background:#eef4fa"></div>
<svg style="left:120px;top:119px" width="12" height="12" viewBox="0 0 12 12"><path d="M0 0.5h11.5L7 5.5v6.5H4.5V5.5z" fill="#3a3a3a"/></svg>
<svg style="left:140px;top:119px" width="14" height="13" viewBox="0 0 14 13"><path d="M0 1.5q5-2.5 10 0V10q-5 2.5-10 0z" fill="#3a3a3a"/><ellipse cx="5" cy="1.6" rx="4" ry="1.2" fill="#f0f0f0"/><path d="M7 6.5h7l-2.6 3v3.5h-1.8v-3.5z" fill="#eeeef2"/><path d="M7.8 7h5.4l-2 2.4v3h-1.4v-3z" fill="#2a2a2a"/></svg>
<svg style="left:211px;top:120px" width="14" height="12" viewBox="0 0 14 12"><rect x="0" y="0.5" width="1.4" height="11" fill="#555"/><path d="M3.5 6l7.2-5v10z" fill="#3c3c3c"/><rect x="12" y="0.5" width="1.6" height="11" fill="#6a6a6a"/></svg>
<svg style="left:234px;top:121px" width="9" height="11" viewBox="0 0 9 11"><path d="M0 5.2L8 0v10.5z" fill="#3c3c3c"/></svg>
<svg style="left:253px;top:119px" width="12" height="14" viewBox="0 0 12 14"><rect x="0.7" y="0.7" width="10.6" height="12.6" fill="#fff" stroke="#555" stroke-width="1.4"/><rect x="3" y="4.7" width="6" height="1.5" fill="#333"/><rect x="3" y="7.8" width="6" height="1.5" fill="#333"/></svg>
<svg style="left:276px;top:121px" width="9" height="11" viewBox="0 0 9 11"><path d="M8.2 5.2L0 0v10.5z" fill="#3c3c3c"/></svg>
<svg style="left:293px;top:120px" width="14" height="12" viewBox="0 0 14 12"><rect x="0" y="0.5" width="1.6" height="11" fill="#6a6a6a"/><path d="M10.5 6L3 1v10z" fill="#3c3c3c"/><rect x="12" y="0.5" width="1.4" height="11" fill="#555"/></svg>
<svg style="left:321px;top:121px" width="12" height="11" viewBox="0 0 12 11"><path d="M2 9.5l7.5-7.5" stroke="#1d5fa8" stroke-width="2.6"/><path d="M9 1.5l1-1 1.5 1.5-1 1z" fill="#1d5fa8"/><path d="M0.5 10.5l1-2.5 1.5 1.5z" fill="#1d5fa8"/></svg>
<svg style="left:341px;top:120px" width="12" height="12" viewBox="0 0 12 12"><path d="M0 0h9.5l2.5 2.5V12H0z" fill="#7e7e7e"/><rect x="3" y="0" width="5" height="4" fill="#eeeef2"/><rect x="5.5" y="0.6" width="1.3" height="2.4" fill="#7e7e7e"/></svg>
<svg style="left:360px;top:120px" width="14" height="12" viewBox="0 0 14 12"><path d="M1.5 11l11-10M1.5 1l11 10" stroke="#8a8a8a" stroke-width="1.6"/></svg>
<svg style="left:387px;top:120px" width="14" height="13" viewBox="0 0 14 13"><rect x="0.7" y="0.7" width="12.6" height="11.6" fill="#fff" stroke="#2f2f2f" stroke-width="1.4"/><rect x="0" y="0" width="14" height="2.5" fill="#2f2f2f"/><path d="M9.5 5.5A3 3 0 1 0 10 8.5" fill="none" stroke="#1c62b4" stroke-width="1.7"/><path d="M8 4h3.5v3.5z" fill="#1c62b4"/></svg>
<svg style="left:413px;top:119px" width="13" height="13" viewBox="0 0 13 13"><rect x="0" y="0" width="13" height="13" fill="#3a3a3a"/><rect x="1" y="1" width="2" height="3" fill="#fff"/><rect x="4" y="1" width="2" height="3" fill="#fff"/><rect x="7" y="1" width="2" height="3" fill="#fff"/><rect x="10" y="1" width="2" height="3" fill="#fff"/><rect x="1" y="5" width="2" height="3" fill="#fff"/><rect x="4" y="5" width="2" height="3" fill="#fff"/><rect x="7" y="5" width="2" height="3" fill="#fff"/><rect x="10" y="5" width="2" height="3" fill="#fff"/><rect x="1" y="9" width="2" height="3" fill="#fff"/><rect x="4" y="9" width="2" height="3" fill="#fff"/><rect x="7" y="9" width="2" height="3" fill="#fff"/><rect x="10" y="9" width="2" height="3" fill="#fff"/></svg>
<svg style="left:434px;top:120px" width="12" height="13" viewBox="0 0 12 13"><rect x="5" y="0" width="6.5" height="2" fill="#3a3a3a"/><path d="M11 0v6.5" stroke="#3a3a3a" stroke-width="1.2"/><rect x="3" y="3" width="6.5" height="2" fill="#3a3a3a"/><path d="M9 3v6.5" stroke="#3a3a3a" stroke-width="1.2"/><rect x="0.6" y="6.1" width="6" height="6.4" fill="#fff" stroke="#3a3a3a" stroke-width="1.2"/><rect x="0" y="5.5" width="7" height="2" fill="#3a3a3a"/><path d="M1 9.5h5" stroke="#3a3a3a"/></svg>
<svg style="left:454px;top:120px" width="14" height="13" viewBox="0 0 14 13"><rect x="0" y="0" width="1.8" height="13" fill="#3a3a3a"/><rect x="3" y="0" width="10.5" height="2" fill="#3a3a3a"/><rect x="3.6" y="2.6" width="9" height="10" fill="#fff" stroke="#555" stroke-width="1.2"/><path d="M7 3v9M4 7h8" stroke="#777"/><path d="M8 9.5A2.5 2.5 0 1 1 11 11.5" fill="none" stroke="#1c62b4" stroke-width="1.5"/><path d="M7 8h3l-2.5 3z" fill="#1c62b4"/></svg>
<svg style="left:264px;top:162px" width="13" height="19" viewBox="0 0 13 19"><path d="M0.7 0.7V15.3L4.2 12l3 6.2 2.3-1-3-6.1h4.8z" fill="#fff" stroke="#1a1a2e" stroke-width="1.1" stroke-linejoin="round"/></svg>
<div class="sep" style="left:65px;top:116px;height:19px"></div>
<div class="sep" style="left:92px;top:116px;height:19px"></div>
<div class="sep" style="left:312px;top:116px;height:19px"></div>
<div class="sep" style="left:380px;top:116px;height:19px"></div>
<div class="sep" style="left:406px;top:116px;height:19px"></div>
</body></html>
